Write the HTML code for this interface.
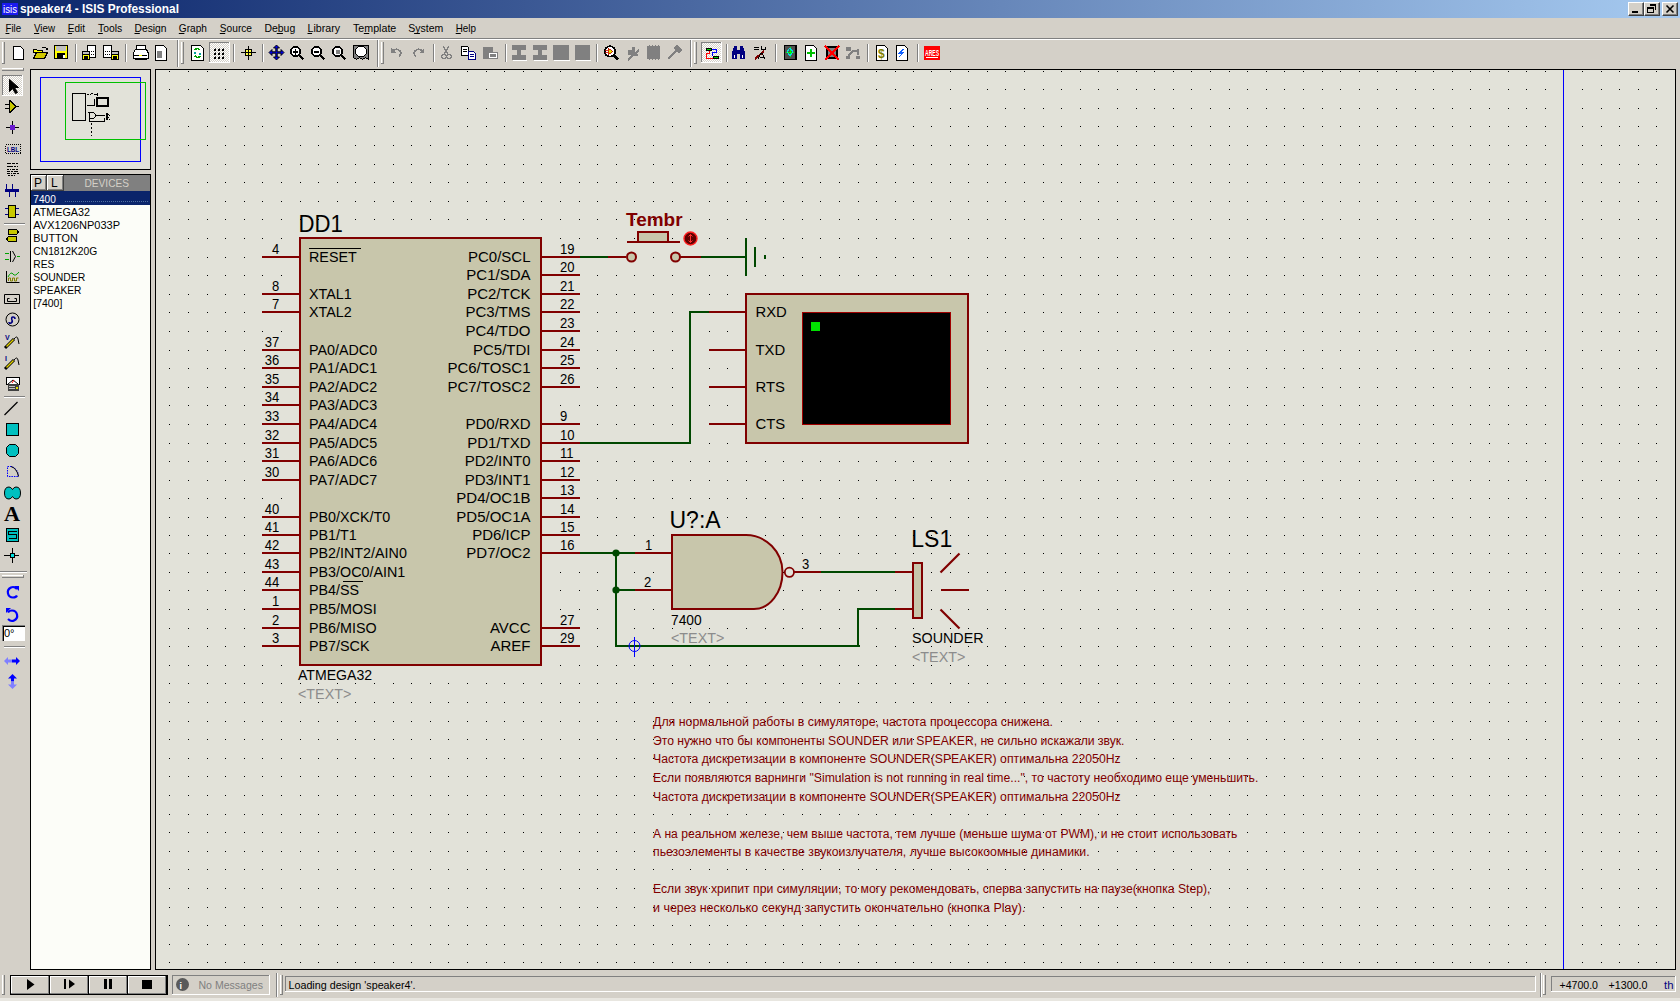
<!DOCTYPE html><html><head><meta charset="utf-8"><style>
*{margin:0;padding:0;box-sizing:border-box}
html,body{width:1680px;height:1001px;overflow:hidden;background:#d4d0c8;font-family:"Liberation Sans", sans-serif;position:relative}
.a{position:absolute}
.t{position:absolute;white-space:nowrap;font-size:11px;color:#000;line-height:1}
.u{text-decoration:underline}
</style></head><body><div class="a" style="left:0;top:0;width:1680px;height:18px;background:linear-gradient(to right,#0a246a,#a6caf0)"></div>
<div class="a" style="left:2px;top:3px;width:16px;height:12px;background:#1a1af0"></div>
<div class="a" style="left:1628px;top:2px;width:16px;height:14px;background:#d4d0c8;border-top:1px solid #fff;border-left:1px solid #fff;border-right:1px solid #404040;border-bottom:1px solid #404040;box-shadow:inset -1px -1px 0 #808080"></div><div class="a" style="left:1632px;top:11px;width:6px;height:2px;background:#000"></div>
<div class="a" style="left:1644px;top:2px;width:16px;height:14px;background:#d4d0c8;border-top:1px solid #fff;border-left:1px solid #fff;border-right:1px solid #404040;border-bottom:1px solid #404040;box-shadow:inset -1px -1px 0 #808080"></div><div class="a" style="left:1647px;top:7px;width:7px;height:6px;border:1px solid #000;border-top-width:2px"></div><div class="a" style="left:1650px;top:4px;width:6px;height:6px;border:1px solid #000;border-top-width:2px;border-left:none;border-bottom:none"></div>
<div class="a" style="left:1662px;top:2px;width:16px;height:14px;background:#d4d0c8;border-top:1px solid #fff;border-left:1px solid #fff;border-right:1px solid #404040;border-bottom:1px solid #404040;box-shadow:inset -1px -1px 0 #808080"></div>
<div class="a" style="left:0;top:38px;width:1680px;height:1px;background:#808080"></div>
<div class="a" style="left:0;top:39px;width:1680px;height:1px;background:#fff"></div>
<div class="a" style="left:30px;top:69px;width:121px;height:101px;border:1px solid #000;background:#e2e2d9"></div>
<div class="a" style="left:30px;top:174px;width:121px;height:796px;border:1px solid #000;background:#fcfdf8"></div>
<div class="a" style="left:155px;top:69px;width:1521px;height:901px;border:1px solid #000;background:#e2e2d9"></div>
<div class="a" style="left:0;top:998px;width:1680px;height:3px;background:#e8e6e0"></div><svg class="a" style="left:0;top:0" width="1680" height="1001" viewBox="0 0 1680 1001" font-family="Liberation Sans, sans-serif"><text x="3" y="13" font-size="11" fill="#fff" textLength="14" lengthAdjust="spacingAndGlyphs">isis</text>
<text x="20" y="13" font-size="12" fill="#fff" textLength="159" lengthAdjust="spacingAndGlyphs" font-weight="bold">speaker4 - ISIS Professional</text>
<path d="M1666.5 5.5l7 7M1673.5 5.5l-7 7" stroke="#000" stroke-width="1.6" fill="none"/>
<text x="5.5" y="32" font-size="11.5" fill="#000" textLength="15.7" lengthAdjust="spacingAndGlyphs">File</text>
<rect x="5.5" y="33" width="3.9" height="1" fill="#000"/>
<text x="34" y="32" font-size="11.5" fill="#000" textLength="21" lengthAdjust="spacingAndGlyphs">View</text>
<rect x="34.0" y="33" width="5.2" height="1" fill="#000"/>
<text x="67.8" y="32" font-size="11.5" fill="#000" textLength="17.2" lengthAdjust="spacingAndGlyphs">Edit</text>
<rect x="67.8" y="33" width="4.3" height="1" fill="#000"/>
<text x="98" y="32" font-size="11.5" fill="#000" textLength="24.2" lengthAdjust="spacingAndGlyphs">Tools</text>
<rect x="98.0" y="33" width="4.8" height="1" fill="#000"/>
<text x="134.5" y="32" font-size="11.5" fill="#000" textLength="32.0" lengthAdjust="spacingAndGlyphs">Design</text>
<rect x="134.5" y="33" width="5.3" height="1" fill="#000"/>
<text x="178.8" y="32" font-size="11.5" fill="#000" textLength="28.2" lengthAdjust="spacingAndGlyphs">Graph</text>
<rect x="178.8" y="33" width="5.6" height="1" fill="#000"/>
<text x="219.8" y="32" font-size="11.5" fill="#000" textLength="32.2" lengthAdjust="spacingAndGlyphs">Source</text>
<rect x="219.8" y="33" width="5.4" height="1" fill="#000"/>
<text x="264.5" y="32" font-size="11.5" fill="#000" textLength="30.7" lengthAdjust="spacingAndGlyphs">Debug</text>
<rect x="276.8" y="33" width="6.1" height="1" fill="#000"/>
<text x="307.5" y="32" font-size="11.5" fill="#000" textLength="32.5" lengthAdjust="spacingAndGlyphs">Library</text>
<rect x="307.5" y="33" width="4.6" height="1" fill="#000"/>
<text x="353" y="32" font-size="11.5" fill="#000" textLength="43.3" lengthAdjust="spacingAndGlyphs">Template</text>
<rect x="363.8" y="33" width="5.4" height="1" fill="#000"/>
<text x="408.3" y="32" font-size="11.5" fill="#000" textLength="35.0" lengthAdjust="spacingAndGlyphs">System</text>
<rect x="414.1" y="33" width="5.8" height="1" fill="#000"/>
<text x="455.7" y="32" font-size="11.5" fill="#000" textLength="20.3" lengthAdjust="spacingAndGlyphs">Help</text>
<rect x="455.7" y="33" width="5.1" height="1" fill="#000"/>
<defs><pattern id="dith" width="2" height="2" patternUnits="userSpaceOnUse"><rect width="2" height="2" fill="#d4d0c8"/><rect width="1" height="1" fill="#fff"/><rect x="1" y="1" width="1" height="1" fill="#fff"/></pattern></defs>
<g shape-rendering="crispEdges">
<rect x="2" y="42" width="1" height="22" fill="#fff"/>
<rect x="3" y="42" width="1" height="22" fill="#d4d0c8"/>
<rect x="4" y="42" width="1" height="22" fill="#808080"/>
<rect x="2" y="63" width="3" height="1" fill="#808080"/>
<path d="M13.5 46.5h7l3 3v9.5h-10z" fill="#fff" stroke="#000" stroke-width="1"/>
<path d="M33.5 49.5h3l1 1h5v2h-9z" fill="#ffff00" stroke="#000" stroke-width="1"/>
<path d="M33.5 58.5l3-6h11l-3 6z" fill="#d0c800" stroke="#000" stroke-width="1"/>
<path d="M41.5 48.5q2-3 5-0" fill="none" stroke="#000" stroke-width="1"/>
<rect x="46" y="48" width="2" height="2" fill="#000"/>
<rect x="54" y="45" width="14" height="14" fill="#000"/>
<rect x="55" y="46" width="12" height="6" fill="#ffff00"/>
<rect x="56" y="46" width="10" height="5" fill="#c0c0c0"/>
<rect x="55" y="52" width="2" height="6" fill="#ffff00"/>
<rect x="65" y="52" width="2" height="6" fill="#ffff00"/>
<rect x="57" y="52" width="8" height="1" fill="#ffff00"/>
<rect x="63" y="55" width="2" height="3" fill="#fff"/>
<rect x="75" y="44" width="1" height="18" fill="#808080"/>
<rect x="76" y="44" width="1" height="18" fill="#fff"/>
<rect x="87" y="45" width="9" height="13" fill="#000"/>
<rect x="88" y="46" width="7" height="11" fill="#fff"/>
<rect x="89" y="51" width="1" height="1" fill="#000"/>
<rect x="91" y="51" width="1" height="1" fill="#000"/>
<rect x="93" y="51" width="1" height="1" fill="#000"/>
<rect x="89" y="54" width="1" height="1" fill="#000"/>
<rect x="91" y="54" width="1" height="1" fill="#000"/>
<rect x="93" y="54" width="1" height="1" fill="#000"/>
<rect x="82" y="51" width="8" height="9" fill="#000"/>
<rect x="83" y="52" width="6" height="2" fill="#c0c0c0"/>
<rect x="83" y="55" width="6" height="4" fill="#ffff00"/>
<rect x="84" y="56" width="4" height="3" fill="#000"/>
<rect x="103" y="45" width="9" height="13" fill="#000"/>
<rect x="104" y="46" width="7" height="11" fill="#fff"/>
<rect x="105" y="51" width="1" height="1" fill="#000"/>
<rect x="107" y="51" width="1" height="1" fill="#000"/>
<rect x="109" y="51" width="1" height="1" fill="#000"/>
<rect x="105" y="54" width="1" height="1" fill="#000"/>
<rect x="107" y="54" width="1" height="1" fill="#000"/>
<rect x="109" y="54" width="1" height="1" fill="#000"/>
<rect x="111" y="51" width="8" height="9" fill="#000"/>
<rect x="112" y="52" width="6" height="2" fill="#c0c0c0"/>
<rect x="112" y="55" width="6" height="4" fill="#ffff00"/>
<rect x="113" y="56" width="4" height="3" fill="#000"/>
<rect x="125" y="44" width="1" height="18" fill="#808080"/>
<rect x="126" y="44" width="1" height="18" fill="#fff"/>
<path d="M136.5 45.5h9v4h-9z" fill="#fff" stroke="#000" stroke-width="1"/>
<path d="M133.5 52.5l2-3h11l1.5 3v6h-14.5z" fill="#fff" stroke="#000" stroke-width="1"/>
<rect x="134" y="55" width="13" height="1" fill="#000"/>
<rect x="139" y="55" width="3" height="1" fill="#ffff00"/>
<rect x="135" y="59" width="12" height="1" fill="#000"/>
<path d="M155.5 45.5h8l3 3v11.5h-11z" fill="#fff" stroke="#000" stroke-width="1"/>
<rect x="157" y="51" width="5" height="7" fill="#808080"/>
<rect x="177" y="40" width="1" height="27" fill="#808080"/>
<rect x="178" y="40" width="1" height="27" fill="#fff"/>
<rect x="181" y="42" width="1" height="22" fill="#fff"/>
<rect x="182" y="42" width="1" height="22" fill="#d4d0c8"/>
<rect x="183" y="42" width="1" height="22" fill="#808080"/>
<rect x="181" y="63" width="3" height="1" fill="#808080"/>
<path d="M191.5 45.5h9l3 3v11.5h-12z" fill="#fff" stroke="#000" stroke-width="1"/>
<path d="M195 50q2-3 5 0M200 56q-2 3-5 0" fill="none" stroke="#00a000" stroke-width="1.6"/>
<rect x="194" y="52" width="2" height="2" fill="#00a0a0"/>
<rect x="199" y="53" width="2" height="2" fill="#00a0a0"/>
<rect x="209" y="42" width="21" height="21" fill="url(#dith)"/>
<rect x="209" y="42" width="21" height="1" fill="#808080"/>
<rect x="209" y="42" width="1" height="21" fill="#808080"/>
<rect x="209" y="62" width="21" height="1" fill="#fff"/>
<rect x="229" y="42" width="1" height="21" fill="#fff"/>
<rect x="214" y="49" width="2" height="2" fill="#000"/>
<rect x="215" y="48" width="1" height="1" fill="#606060"/>
<rect x="218" y="49" width="2" height="2" fill="#000"/>
<rect x="219" y="48" width="1" height="1" fill="#606060"/>
<rect x="222" y="49" width="2" height="2" fill="#000"/>
<rect x="223" y="48" width="1" height="1" fill="#606060"/>
<rect x="214" y="53" width="2" height="2" fill="#000"/>
<rect x="215" y="52" width="1" height="1" fill="#606060"/>
<rect x="218" y="53" width="2" height="2" fill="#000"/>
<rect x="219" y="52" width="1" height="1" fill="#606060"/>
<rect x="222" y="53" width="2" height="2" fill="#000"/>
<rect x="223" y="52" width="1" height="1" fill="#606060"/>
<rect x="214" y="57" width="2" height="2" fill="#000"/>
<rect x="215" y="56" width="1" height="1" fill="#606060"/>
<rect x="218" y="57" width="2" height="2" fill="#000"/>
<rect x="219" y="56" width="1" height="1" fill="#606060"/>
<rect x="222" y="57" width="2" height="2" fill="#000"/>
<rect x="223" y="56" width="1" height="1" fill="#606060"/>
<rect x="233" y="44" width="1" height="18" fill="#808080"/>
<rect x="234" y="44" width="1" height="18" fill="#fff"/>
<rect x="241" y="52" width="15" height="1" fill="#000"/>
<rect x="248" y="46" width="1" height="14" fill="#000"/>
<rect x="245" y="49" width="7" height="7" fill="#000"/>
<rect x="246" y="50" width="2" height="2" fill="#ffff40"/>
<rect x="249" y="50" width="2" height="2" fill="#ffff40"/>
<rect x="246" y="53" width="2" height="2" fill="#ffff40"/>
<rect x="249" y="53" width="2" height="2" fill="#ffff40"/>
<rect x="262" y="44" width="1" height="18" fill="#808080"/>
<rect x="263" y="44" width="1" height="18" fill="#fff"/>
</g>
<path d="M276.5 45L279.5 48H277.25V51.75H281V49.5L284 52.5L281 55.5V53.25H277.25V57H279.5L276.5 60L273.5 57H275.75V53.25H272V55.5L269 52.5L272 49.5V51.75H275.75V48H273.5Z" fill="#0000e0" stroke="#000" stroke-width="0.9"/>
<g shape-rendering="crispEdges">
<circle cx="295.5" cy="51.5" r="4.6" fill="#fff" stroke="#000" stroke-width="2"/>
<path d="M299 55l4.5 4.5" fill="none" stroke="#000" stroke-width="2.2"/>
<rect x="293" y="51" width="5" height="1.5" fill="#000"/>
<rect x="294.8" y="49" width="1.5" height="5.5" fill="#000"/>
<circle cx="316.5" cy="51.5" r="4.6" fill="#fff" stroke="#000" stroke-width="2"/>
<path d="M320 55l4.5 4.5" fill="none" stroke="#000" stroke-width="2.2"/>
<rect x="314" y="51" width="5" height="1.5" fill="#000"/>
<circle cx="337.5" cy="51.5" r="4.6" fill="#fff" stroke="#000" stroke-width="2"/>
<path d="M341 55l4.5 4.5" fill="none" stroke="#000" stroke-width="2.2"/>
<rect x="335.5" y="49.5" width="4" height="4" fill="#808080"/>
<path d="M353.5 45.5h15v14l-3-2-3 2-3-2-3 2-3-2v-12z" fill="#808080" stroke="#000" stroke-width="1"/>
<circle cx="361" cy="51.5" r="5.5" fill="#fff" stroke="#000" stroke-width="1"/>
<rect x="377" y="40" width="1" height="27" fill="#808080"/>
<rect x="378" y="40" width="1" height="27" fill="#fff"/>
<rect x="381" y="42" width="1" height="22" fill="#fff"/>
<rect x="382" y="42" width="1" height="22" fill="#d4d0c8"/>
<rect x="383" y="42" width="1" height="22" fill="#808080"/>
<rect x="381" y="63" width="3" height="1" fill="#808080"/>
<path d="M392 52q4-5 8-1q2 3-1 5" fill="none" stroke="#808080" stroke-width="1.6"/>
<path d="M391 48v5h5z" fill="#808080"/>
<path d="M423 52q-4-5-8-1q-2 3 1 5" fill="none" stroke="#808080" stroke-width="1.6"/>
<path d="M424 48v5h-5z" fill="#808080"/>
<rect x="433" y="44" width="1" height="18" fill="#808080"/>
<rect x="434" y="44" width="1" height="18" fill="#fff"/>
<path d="M443 46l5 8M449 46l-5 8" fill="none" stroke="#808080" stroke-width="1.2"/>
<circle cx="444" cy="56.5" r="2.3" fill="none" stroke="#808080" stroke-width="1.2"/><circle cx="449" cy="56.5" r="2.3" fill="none" stroke="#808080" stroke-width="1.2"/>
<path d="M461.5 46.5h6l1 1v8h-7z" fill="#fff" stroke="#000" stroke-width="1"/>
<rect x="463" y="49" width="4" height="1" fill="#000"/>
<rect x="463" y="51" width="4" height="1" fill="#000"/>
<path d="M468.5 51.5h5l2 2v6h-7z" fill="#fff" stroke="#000080" stroke-width="1"/>
<rect x="470" y="54" width="4" height="1" fill="#000080"/>
<rect x="470" y="56" width="4" height="1" fill="#000080"/>
<rect x="483" y="47" width="10" height="12" fill="#808080"/>
<rect x="488" y="52" width="10" height="7" fill="#808080"/>
<rect x="489" y="53" width="8" height="5" fill="#fff"/>
<rect x="490" y="54" width="6" height="3" fill="#808080"/>
<rect x="505" y="44" width="1" height="18" fill="#808080"/>
<rect x="506" y="44" width="1" height="18" fill="#fff"/>
<rect x="512" y="45" width="14" height="5" fill="#808080"/>
<rect x="512" y="55" width="14" height="5" fill="#808080"/>
<rect x="517" y="50" width="4" height="5" fill="#808080"/>
<rect x="513" y="60" width="14" height="1" fill="#fff"/>
<rect x="533" y="45" width="14" height="5" fill="#808080"/>
<rect x="533" y="55" width="14" height="5" fill="#808080"/>
<rect x="538" y="50" width="4" height="5" fill="#808080"/>
<rect x="534" y="60" width="14" height="1" fill="#fff"/>
<rect x="553" y="45" width="16" height="15" fill="#808080"/>
<rect x="554" y="60" width="16" height="1" fill="#fff"/>
<rect x="575" y="45" width="15" height="15" fill="#808080"/>
<rect x="576" y="60" width="15" height="1" fill="#fff"/>
<rect x="596" y="44" width="1" height="18" fill="#808080"/>
<rect x="597" y="44" width="1" height="18" fill="#fff"/>
<circle cx="610" cy="51.5" r="5.2" fill="#fff" stroke="#000" stroke-width="1.8"/>
<path d="M608 48l5 3.5-5 3.5z" fill="#e0e000" stroke="#c00000" stroke-width="0.8"/>
<path d="M605 50.5h3M605 52.5h3" fill="none" stroke="#c00000" stroke-width="0.8"/>
<path d="M614 55.5l4 4" fill="none" stroke="#000" stroke-width="2.2"/>
<path d="M628 50h4v-3h3v5l4-4v3l-3 3h2v2h-5l-5 5v-3l3-3h-3z" fill="#808080"/>
<rect x="647" y="46" width="13" height="13" fill="#808080"/>
<rect x="649" y="45" width="1" height="15" fill="#808080"/>
<rect x="652" y="45" width="1" height="15" fill="#808080"/>
<rect x="655" y="45" width="1" height="15" fill="#808080"/>
<rect x="658" y="45" width="1" height="15" fill="#808080"/>
<path d="M668 59l8-8" fill="none" stroke="#808080" stroke-width="2.2"/>
<path d="M673 48l4-3 5 5-3 3z" fill="#808080"/>
<rect x="690" y="40" width="1" height="27" fill="#808080"/>
<rect x="691" y="40" width="1" height="27" fill="#fff"/>
<rect x="694" y="42" width="1" height="22" fill="#fff"/>
<rect x="695" y="42" width="1" height="22" fill="#d4d0c8"/>
<rect x="696" y="42" width="1" height="22" fill="#808080"/>
<rect x="694" y="63" width="3" height="1" fill="#808080"/>
<rect x="701" y="42" width="21" height="21" fill="url(#dith)"/>
<rect x="701" y="42" width="21" height="1" fill="#808080"/>
<rect x="701" y="42" width="1" height="21" fill="#808080"/>
<rect x="701" y="62" width="21" height="1" fill="#fff"/>
<rect x="721" y="42" width="1" height="21" fill="#fff"/>
<rect x="706" y="48" width="6" height="3" fill="#000"/>
<rect x="707" y="49" width="4" height="1" fill="#00d000"/>
<rect x="713" y="56" width="6" height="3" fill="#000"/>
<rect x="714" y="57" width="4" height="1" fill="#00d000"/>
<path d="M712 49.5h4v3h-4v3h1" fill="none" stroke="#0000ff" stroke-width="1"/>
<path d="M709 51v2h-3v5h7" fill="none" stroke="#ff0000" stroke-width="1"/>
<rect x="726" y="44" width="1" height="18" fill="#808080"/>
<rect x="727" y="44" width="1" height="18" fill="#fff"/>
<path d="M732 59v-6l2-7h3v13zM740 59v-13h3l2 7v6z" fill="#000080"/>
<rect x="737" y="50" width="3" height="4" fill="#000080"/>
<rect x="734" y="55" width="1" height="3" fill="#fff"/>
<rect x="742" y="55" width="1" height="3" fill="#fff"/>
<rect x="754" y="47" width="5" height="1" fill="#000"/>
<rect x="754" y="49" width="5" height="1" fill="#000"/>
<rect x="761" y="46" width="1" height="4" fill="#000"/>
<rect x="762" y="49" width="4" height="1" fill="#000"/>
<rect x="765" y="47" width="1" height="3" fill="#000"/>
<path d="M755 59l9-8" fill="none" stroke="#800000" stroke-width="2"/>
<path d="M758 59l3-6h1l3 6M760 57h4" fill="none" stroke="#000" stroke-width="1"/>
<rect x="775" y="44" width="1" height="18" fill="#808080"/>
<rect x="776" y="44" width="1" height="18" fill="#fff"/>
<rect x="784" y="45" width="13" height="15" fill="#000"/>
<rect x="785" y="46" width="10" height="13" fill="#505050"/>
<path d="M790 47v10M786 52h8" fill="none" stroke="#00ff00" stroke-width="1"/>
<path d="M790 48l3 4-3 4-3-4z" fill="none" stroke="#00e0e0" stroke-width="1"/>
<path d="M805.5 45.5h8l3 3v11.5h-11z" fill="#fff" stroke="#000" stroke-width="1"/>
<rect x="807" y="52" width="8" height="2" fill="#00c000"/>
<rect x="810" y="49" width="2" height="8" fill="#00c000"/>
<rect x="826" y="46" width="12" height="13" fill="#000"/>
<rect x="828" y="48" width="8" height="9" fill="#808080"/>
<path d="M825 46l14 14M839 46l-14 14" fill="none" stroke="#ff0000" stroke-width="1.8"/>
<rect x="846" y="47" width="5" height="4" fill="#808080"/>
<rect x="846" y="56" width="4" height="3" fill="#808080"/>
<rect x="856" y="56" width="4" height="3" fill="#808080"/>
<path d="M848 56l5-5h4M858 49v6" fill="none" stroke="#808080" stroke-width="1.5"/>
<rect x="867" y="44" width="1" height="18" fill="#808080"/>
<rect x="868" y="44" width="1" height="18" fill="#fff"/>
<path d="M876.5 45.5h8l3 3v11.5h-11z" fill="#fff" stroke="#000" stroke-width="1"/>
<text x="878" y="58" font-size="12" font-weight="bold" fill="#808000">$</text>
<path d="M896.5 45.5h8l3 3v11.5h-11z" fill="#fff" stroke="#000" stroke-width="1"/>
<path d="M904 49l-4 4h3l-4 4" fill="none" stroke="#1060ff" stroke-width="1.4"/>
<rect x="917" y="44" width="1" height="18" fill="#808080"/>
<rect x="918" y="44" width="1" height="18" fill="#fff"/>
<rect x="924" y="46" width="16" height="14" fill="#ff0000"/>
<text x="925" y="56" font-size="9" font-weight="bold" fill="#fff" textLength="14" lengthAdjust="spacingAndGlyphs">ARES</text>
<rect x="926" y="57" width="12" height="1" fill="#fff"/>
</g>
<g shape-rendering="crispEdges">
<rect x="2" y="68" width="22" height="1" fill="#fff"/>
<rect x="2" y="70" width="22" height="1" fill="#808080"/>
<rect x="23" y="68" width="1" height="3" fill="#808080"/>
<rect x="2" y="75" width="21" height="21" fill="url(#dith)"/>
<rect x="2" y="75" width="21" height="1" fill="#808080"/>
<rect x="2" y="75" width="1" height="21" fill="#808080"/>
<rect x="2" y="95" width="21" height="1" fill="#fff"/>
<rect x="22" y="75" width="1" height="21" fill="#fff"/>
</g>
<path d="M9.5 79.5v12l3-3 3 5 2-1-3-5h4z" fill="#000" stroke="#000" stroke-width="1" stroke-linejoin="miter"/>
<g shape-rendering="crispEdges">
<path d="M9.5 100.5v12l7-6z" fill="#c8c800" stroke="#000" stroke-width="1.4"/>
<rect x="5" y="104" width="4" height="1.2" fill="#000"/>
<rect x="5" y="108" width="4" height="1.2" fill="#000"/>
<rect x="16" y="106" width="3" height="1.2" fill="#000"/>
<rect x="12" y="121" width="1" height="13" fill="#000"/>
<rect x="6" y="127" width="13" height="1" fill="#000"/>
<rect x="10" y="125" width="5" height="5" fill="#6a1ad0"/>
<path d="M5.5 144.5h15v9h-15z" fill="none" stroke="#000" stroke-width="1" stroke-dasharray="1 1"/>
<text x="7" y="152" font-size="8" font-weight="bold" fill="#000080" textLength="12" lengthAdjust="spacingAndGlyphs">LBL</text>
<rect x="7" y="163" width="4" height="1" fill="#000"/>
<rect x="12" y="163" width="3" height="1" fill="#000"/>
<rect x="16" y="163" width="2" height="1" fill="#000"/>
<rect x="7" y="166" width="6" height="1" fill="#000"/>
<rect x="14" y="166" width="2" height="1" fill="#000"/>
<rect x="17" y="166" width="1" height="1" fill="#000"/>
<rect x="7" y="169" width="2" height="1" fill="#000"/>
<rect x="10" y="169" width="1" height="1" fill="#000"/>
<rect x="12" y="169" width="3" height="1" fill="#000"/>
<rect x="16" y="169" width="2" height="1" fill="#000"/>
<rect x="7" y="171" width="3" height="1" fill="#000"/>
<rect x="11" y="171" width="2" height="1" fill="#000"/>
<rect x="14" y="171" width="4" height="1" fill="#000"/>
<rect x="7" y="173" width="3" height="1" fill="#000"/>
<rect x="11" y="173" width="1" height="1" fill="#000"/>
<rect x="13" y="173" width="3" height="1" fill="#000"/>
<rect x="17" y="173" width="2" height="1" fill="#000"/>
<rect x="8" y="175" width="2" height="1" fill="#000"/>
<rect x="11" y="175" width="2" height="1" fill="#000"/>
<rect x="14" y="175" width="1" height="1" fill="#000"/>
<rect x="5" y="189" width="14" height="3" fill="#000080"/>
<rect x="6" y="184" width="1" height="5" fill="#000080"/>
<rect x="12" y="184" width="1" height="5" fill="#000080"/>
<rect x="9" y="192" width="1" height="5" fill="#000080"/>
<rect x="15" y="192" width="1" height="5" fill="#000080"/>
<rect x="5" y="208" width="14" height="1" fill="#000080"/>
<rect x="5" y="214" width="14" height="1" fill="#000080"/>
<path d="M8.5 205.5h7v12h-7z" fill="#c8c800" stroke="#000" stroke-width="1"/>
<rect x="4" y="223" width="21" height="1" fill="#808080"/>
<rect x="4" y="224" width="21" height="1" fill="#fff"/>
<path d="M8.5 229.5h8l2 2.5-2 2.5h-8z" fill="#c8c800" stroke="#000" stroke-width="1"/>
<path d="M8.5 236.5h8v5h-8l-2-2.5z" fill="#c8c800" stroke="#000" stroke-width="1"/>
<rect x="5" y="253" width="4" height="1" fill="#00a000"/>
<rect x="5" y="259" width="4" height="1" fill="#00a000"/>
<rect x="17" y="256" width="3" height="1" fill="#00a000"/>
<rect x="10" y="251" width="1" height="11" fill="#000"/>
</g>
<path d="M12.5 251l3 5.5-3 5.5" fill="none" stroke="#000" stroke-width="1"/>
<path d="M6.5 271v11.5h13" fill="none" stroke="#000" stroke-width="1"/>
<path d="M8 277q3-6 5-3t6-2" fill="none" stroke="#00a000" stroke-width="1"/>
<path d="M8.5 281v-3h2v3h2v-3h2v3h2v-3h2" fill="none" stroke="#808000" stroke-width="1"/>
<path d="M4.5 294.5h15v9h-15z" fill="none" stroke="#000" stroke-width="1"/>
<path d="M7.5 301.5v-3h2M14.5 298.5h2v3h-9" fill="none" stroke="#000" stroke-width="1"/>
<circle cx="12.5" cy="319.5" r="6.5" fill="none" stroke="#000" stroke-width="1"/>
<path d="M9 322q0 2 2 1q2-1 1-3q-1-3 1-3q2 0 2 2" fill="none" stroke="#000080" stroke-width="1.6"/>
<text x="5" y="340" font-size="7" font-weight="bold" fill="#000080">V</text>
<path d="M5 348l9-9" fill="none" stroke="#000" stroke-width="3"/>
<path d="M6.5 346.5l7-7" fill="none" stroke="#e0d000" stroke-width="1.4"/>
<path d="M14 339q3-4 4 0l1 5" fill="none" stroke="#000" stroke-width="1"/>
<text x="5" y="361" font-size="7" font-weight="bold" fill="#000080">I</text>
<path d="M5 369l9-9" fill="none" stroke="#000" stroke-width="3"/>
<path d="M6.5 367.5l7-7" fill="none" stroke="#e0d000" stroke-width="1.4"/>
<path d="M14 360q3-4 4 0l1 5" fill="none" stroke="#000" stroke-width="1"/>
<g shape-rendering="crispEdges">
<rect x="6" y="377" width="14" height="8" fill="#000"/>
<rect x="7" y="378" width="12" height="6" fill="#fff"/>
<rect x="8" y="384" width="11" height="7" fill="#404040"/>
<rect x="9" y="386" width="6" height="1" fill="#c0c0c0"/>
<rect x="9" y="388" width="6" height="1" fill="#c0c0c0"/>
<rect x="16" y="387" width="2" height="2" fill="#e0e000"/>
</g>
<path d="M8 384l5-4 5 4" fill="none" stroke="#000" stroke-width="1"/>
<path d="M12 383l2-3" fill="none" stroke="#ff0000" stroke-width="1"/>
<g shape-rendering="crispEdges">
<rect x="4" y="396" width="21" height="1" fill="#808080"/>
<rect x="4" y="397" width="21" height="1" fill="#fff"/>
</g>
<path d="M4.5 415l13-13" fill="none" stroke="#000" stroke-width="1.3"/>
<rect x="6.5" y="423.5" width="12" height="12" fill="#00c0c0" stroke="#000" stroke-width="1" shape-rendering="crispEdges"/>
<path d="M9.5 444.5h6l3 3v6l-3 3h-6l-3-3v-6z" fill="#00c0c0" stroke="#000" stroke-width="1"/>
<path d="M7.5 476.5v-10h4q6 2 7 9v1z" fill="none" stroke="#0000ff" stroke-width="1" stroke-dasharray="1.5 1"/>
<path d="M11 466.5q6 2 7.5 10" fill="none" stroke="#000" stroke-width="1"/>
<path d="M4.5 493q0-6 4.5-6q2 0 3.5 2.5q1.5-2.5 3.5-2.5q4.5 0 4.5 6t-4.5 6q-2 0-3.5-2.5q-1.5 2.5-3.5 2.5q-4.5 0-4.5-6z" fill="#00c0c0" stroke="#000" stroke-width="1"/>
<text x="4" y="521" font-size="20" font-weight="bold" font-family="Liberation Serif, serif" fill="#000" textLength="16" lengthAdjust="spacingAndGlyphs">A</text>
<g shape-rendering="crispEdges">
<rect x="6" y="528" width="13" height="14" fill="#000"/>
<rect x="7" y="529" width="11" height="12" fill="#00c0c0"/>
<path d="M16.5 531.5h-8v3h8v4h-8" fill="none" stroke="#000" stroke-width="1.8"/>
<rect x="12" y="548" width="1" height="15" fill="#000"/>
<rect x="4" y="555" width="15" height="1" fill="#000"/>
<rect x="10" y="553" width="5" height="5" fill="#000"/>
<rect x="11" y="554" width="3" height="3" fill="#00e0e0"/>
<rect x="0" y="571" width="27" height="1" fill="#808080"/>
<rect x="0" y="572" width="27" height="1" fill="#fff"/>
<rect x="2" y="575" width="22" height="1" fill="#fff"/>
<rect x="2" y="577" width="22" height="1" fill="#808080"/>
<rect x="23" y="575" width="1" height="3" fill="#808080"/>
</g>
<path d="M17 589q-3-3-6-1.5q-4 2-3 6q1 4 5 4q3 0 4-2" fill="none" stroke="#0000ff" stroke-width="2.2"/>
<path d="M14 586h5v5z" fill="#0000ff"/>
<path d="M8 619q3 3 6 1.5q4-2 3-6q-1-4-5-4q-3 0-4 2" fill="none" stroke="#0000ff" stroke-width="2.2"/>
<path d="M11 608h-5v5z" fill="#0000ff"/>
<g shape-rendering="crispEdges">
<rect x="2" y="625" width="23" height="16" fill="#fff"/>
<rect x="2" y="625" width="23" height="1" fill="#808080"/>
<rect x="2" y="625" width="1" height="16" fill="#808080"/>
<rect x="3" y="626" width="22" height="1" fill="#000"/>
<rect x="3" y="626" width="1" height="15" fill="#000"/>
</g>
<text x="4" y="637" font-size="11" fill="#000">0°</text>
<g shape-rendering="crispEdges">
<rect x="4" y="646" width="21" height="1" fill="#808080"/>
<rect x="4" y="647" width="21" height="1" fill="#fff"/>
</g>
<path d="M4 661l4-4v2.5h4v3h-4v2.5z" fill="#8080ff"/>
<path d="M20 661l-4-4v2.5h-4v3h4v2.5z" fill="#0000ff"/>
<path d="M12.5 674l-4.5 4.5h3v3h3v-3h3z" fill="#0000ff"/>
<path d="M12.5 689l-4.5-4.5h3v-3h3v3h3z" fill="#8080ff"/>
<path fill="#000" shape-rendering="crispEdges" d="M169 71h1v1h-1zM188 71h1v1h-1zM207 71h1v1h-1zM225 71h1v1h-1zM244 71h1v1h-1zM262 71h1v1h-1zM281 71h1v1h-1zM300 71h1v1h-1zM318 71h1v1h-1zM337 71h1v1h-1zM355 71h1v1h-1zM374 71h1v1h-1zM393 71h1v1h-1zM411 71h1v1h-1zM430 71h1v1h-1zM448 71h1v1h-1zM467 71h1v1h-1zM486 71h1v1h-1zM504 71h1v1h-1zM523 71h1v1h-1zM541 71h1v1h-1zM560 71h1v1h-1zM579 71h1v1h-1zM597 71h1v1h-1zM616 71h1v1h-1zM634 71h1v1h-1zM653 71h1v1h-1zM672 71h1v1h-1zM690 71h1v1h-1zM709 71h1v1h-1zM727 71h1v1h-1zM746 71h1v1h-1zM765 71h1v1h-1zM783 71h1v1h-1zM802 71h1v1h-1zM820 71h1v1h-1zM839 71h1v1h-1zM858 71h1v1h-1zM876 71h1v1h-1zM895 71h1v1h-1zM913 71h1v1h-1zM931 71h1v1h-1zM950 71h1v1h-1zM968 71h1v1h-1zM987 71h1v1h-1zM1005 71h1v1h-1zM1024 71h1v1h-1zM1043 71h1v1h-1zM1061 71h1v1h-1zM1080 71h1v1h-1zM1098 71h1v1h-1zM1117 71h1v1h-1zM1136 71h1v1h-1zM1154 71h1v1h-1zM1173 71h1v1h-1zM1191 71h1v1h-1zM1210 71h1v1h-1zM1229 71h1v1h-1zM1247 71h1v1h-1zM1266 71h1v1h-1zM1284 71h1v1h-1zM1303 71h1v1h-1zM1322 71h1v1h-1zM1340 71h1v1h-1zM1359 71h1v1h-1zM1377 71h1v1h-1zM1396 71h1v1h-1zM1415 71h1v1h-1zM1433 71h1v1h-1zM1452 71h1v1h-1zM1470 71h1v1h-1zM1489 71h1v1h-1zM1508 71h1v1h-1zM1526 71h1v1h-1zM1545 71h1v1h-1zM1563 71h1v1h-1zM1582 71h1v1h-1zM1601 71h1v1h-1zM1619 71h1v1h-1zM1638 71h1v1h-1zM1656 71h1v1h-1zM169 89h1v1h-1zM188 89h1v1h-1zM207 89h1v1h-1zM225 89h1v1h-1zM244 89h1v1h-1zM262 89h1v1h-1zM281 89h1v1h-1zM300 89h1v1h-1zM318 89h1v1h-1zM337 89h1v1h-1zM355 89h1v1h-1zM374 89h1v1h-1zM393 89h1v1h-1zM411 89h1v1h-1zM430 89h1v1h-1zM448 89h1v1h-1zM467 89h1v1h-1zM486 89h1v1h-1zM504 89h1v1h-1zM523 89h1v1h-1zM541 89h1v1h-1zM560 89h1v1h-1zM579 89h1v1h-1zM597 89h1v1h-1zM616 89h1v1h-1zM634 89h1v1h-1zM653 89h1v1h-1zM672 89h1v1h-1zM690 89h1v1h-1zM709 89h1v1h-1zM727 89h1v1h-1zM746 89h1v1h-1zM765 89h1v1h-1zM783 89h1v1h-1zM802 89h1v1h-1zM820 89h1v1h-1zM839 89h1v1h-1zM858 89h1v1h-1zM876 89h1v1h-1zM895 89h1v1h-1zM913 89h1v1h-1zM931 89h1v1h-1zM950 89h1v1h-1zM968 89h1v1h-1zM987 89h1v1h-1zM1005 89h1v1h-1zM1024 89h1v1h-1zM1043 89h1v1h-1zM1061 89h1v1h-1zM1080 89h1v1h-1zM1098 89h1v1h-1zM1117 89h1v1h-1zM1136 89h1v1h-1zM1154 89h1v1h-1zM1173 89h1v1h-1zM1191 89h1v1h-1zM1210 89h1v1h-1zM1229 89h1v1h-1zM1247 89h1v1h-1zM1266 89h1v1h-1zM1284 89h1v1h-1zM1303 89h1v1h-1zM1322 89h1v1h-1zM1340 89h1v1h-1zM1359 89h1v1h-1zM1377 89h1v1h-1zM1396 89h1v1h-1zM1415 89h1v1h-1zM1433 89h1v1h-1zM1452 89h1v1h-1zM1470 89h1v1h-1zM1489 89h1v1h-1zM1508 89h1v1h-1zM1526 89h1v1h-1zM1545 89h1v1h-1zM1563 89h1v1h-1zM1582 89h1v1h-1zM1601 89h1v1h-1zM1619 89h1v1h-1zM1638 89h1v1h-1zM1656 89h1v1h-1zM169 108h1v1h-1zM188 108h1v1h-1zM207 108h1v1h-1zM225 108h1v1h-1zM244 108h1v1h-1zM262 108h1v1h-1zM281 108h1v1h-1zM300 108h1v1h-1zM318 108h1v1h-1zM337 108h1v1h-1zM355 108h1v1h-1zM374 108h1v1h-1zM393 108h1v1h-1zM411 108h1v1h-1zM430 108h1v1h-1zM448 108h1v1h-1zM467 108h1v1h-1zM486 108h1v1h-1zM504 108h1v1h-1zM523 108h1v1h-1zM541 108h1v1h-1zM560 108h1v1h-1zM579 108h1v1h-1zM597 108h1v1h-1zM616 108h1v1h-1zM634 108h1v1h-1zM653 108h1v1h-1zM672 108h1v1h-1zM690 108h1v1h-1zM709 108h1v1h-1zM727 108h1v1h-1zM746 108h1v1h-1zM765 108h1v1h-1zM783 108h1v1h-1zM802 108h1v1h-1zM820 108h1v1h-1zM839 108h1v1h-1zM858 108h1v1h-1zM876 108h1v1h-1zM895 108h1v1h-1zM913 108h1v1h-1zM931 108h1v1h-1zM950 108h1v1h-1zM968 108h1v1h-1zM987 108h1v1h-1zM1005 108h1v1h-1zM1024 108h1v1h-1zM1043 108h1v1h-1zM1061 108h1v1h-1zM1080 108h1v1h-1zM1098 108h1v1h-1zM1117 108h1v1h-1zM1136 108h1v1h-1zM1154 108h1v1h-1zM1173 108h1v1h-1zM1191 108h1v1h-1zM1210 108h1v1h-1zM1229 108h1v1h-1zM1247 108h1v1h-1zM1266 108h1v1h-1zM1284 108h1v1h-1zM1303 108h1v1h-1zM1322 108h1v1h-1zM1340 108h1v1h-1zM1359 108h1v1h-1zM1377 108h1v1h-1zM1396 108h1v1h-1zM1415 108h1v1h-1zM1433 108h1v1h-1zM1452 108h1v1h-1zM1470 108h1v1h-1zM1489 108h1v1h-1zM1508 108h1v1h-1zM1526 108h1v1h-1zM1545 108h1v1h-1zM1563 108h1v1h-1zM1582 108h1v1h-1zM1601 108h1v1h-1zM1619 108h1v1h-1zM1638 108h1v1h-1zM1656 108h1v1h-1zM169 126h1v1h-1zM188 126h1v1h-1zM207 126h1v1h-1zM225 126h1v1h-1zM244 126h1v1h-1zM262 126h1v1h-1zM281 126h1v1h-1zM300 126h1v1h-1zM318 126h1v1h-1zM337 126h1v1h-1zM355 126h1v1h-1zM374 126h1v1h-1zM393 126h1v1h-1zM411 126h1v1h-1zM430 126h1v1h-1zM448 126h1v1h-1zM467 126h1v1h-1zM486 126h1v1h-1zM504 126h1v1h-1zM523 126h1v1h-1zM541 126h1v1h-1zM560 126h1v1h-1zM579 126h1v1h-1zM597 126h1v1h-1zM616 126h1v1h-1zM634 126h1v1h-1zM653 126h1v1h-1zM672 126h1v1h-1zM690 126h1v1h-1zM709 126h1v1h-1zM727 126h1v1h-1zM746 126h1v1h-1zM765 126h1v1h-1zM783 126h1v1h-1zM802 126h1v1h-1zM820 126h1v1h-1zM839 126h1v1h-1zM858 126h1v1h-1zM876 126h1v1h-1zM895 126h1v1h-1zM913 126h1v1h-1zM931 126h1v1h-1zM950 126h1v1h-1zM968 126h1v1h-1zM987 126h1v1h-1zM1005 126h1v1h-1zM1024 126h1v1h-1zM1043 126h1v1h-1zM1061 126h1v1h-1zM1080 126h1v1h-1zM1098 126h1v1h-1zM1117 126h1v1h-1zM1136 126h1v1h-1zM1154 126h1v1h-1zM1173 126h1v1h-1zM1191 126h1v1h-1zM1210 126h1v1h-1zM1229 126h1v1h-1zM1247 126h1v1h-1zM1266 126h1v1h-1zM1284 126h1v1h-1zM1303 126h1v1h-1zM1322 126h1v1h-1zM1340 126h1v1h-1zM1359 126h1v1h-1zM1377 126h1v1h-1zM1396 126h1v1h-1zM1415 126h1v1h-1zM1433 126h1v1h-1zM1452 126h1v1h-1zM1470 126h1v1h-1zM1489 126h1v1h-1zM1508 126h1v1h-1zM1526 126h1v1h-1zM1545 126h1v1h-1zM1563 126h1v1h-1zM1582 126h1v1h-1zM1601 126h1v1h-1zM1619 126h1v1h-1zM1638 126h1v1h-1zM1656 126h1v1h-1zM169 145h1v1h-1zM188 145h1v1h-1zM207 145h1v1h-1zM225 145h1v1h-1zM244 145h1v1h-1zM262 145h1v1h-1zM281 145h1v1h-1zM300 145h1v1h-1zM318 145h1v1h-1zM337 145h1v1h-1zM355 145h1v1h-1zM374 145h1v1h-1zM393 145h1v1h-1zM411 145h1v1h-1zM430 145h1v1h-1zM448 145h1v1h-1zM467 145h1v1h-1zM486 145h1v1h-1zM504 145h1v1h-1zM523 145h1v1h-1zM541 145h1v1h-1zM560 145h1v1h-1zM579 145h1v1h-1zM597 145h1v1h-1zM616 145h1v1h-1zM634 145h1v1h-1zM653 145h1v1h-1zM672 145h1v1h-1zM690 145h1v1h-1zM709 145h1v1h-1zM727 145h1v1h-1zM746 145h1v1h-1zM765 145h1v1h-1zM783 145h1v1h-1zM802 145h1v1h-1zM820 145h1v1h-1zM839 145h1v1h-1zM858 145h1v1h-1zM876 145h1v1h-1zM895 145h1v1h-1zM913 145h1v1h-1zM931 145h1v1h-1zM950 145h1v1h-1zM968 145h1v1h-1zM987 145h1v1h-1zM1005 145h1v1h-1zM1024 145h1v1h-1zM1043 145h1v1h-1zM1061 145h1v1h-1zM1080 145h1v1h-1zM1098 145h1v1h-1zM1117 145h1v1h-1zM1136 145h1v1h-1zM1154 145h1v1h-1zM1173 145h1v1h-1zM1191 145h1v1h-1zM1210 145h1v1h-1zM1229 145h1v1h-1zM1247 145h1v1h-1zM1266 145h1v1h-1zM1284 145h1v1h-1zM1303 145h1v1h-1zM1322 145h1v1h-1zM1340 145h1v1h-1zM1359 145h1v1h-1zM1377 145h1v1h-1zM1396 145h1v1h-1zM1415 145h1v1h-1zM1433 145h1v1h-1zM1452 145h1v1h-1zM1470 145h1v1h-1zM1489 145h1v1h-1zM1508 145h1v1h-1zM1526 145h1v1h-1zM1545 145h1v1h-1zM1563 145h1v1h-1zM1582 145h1v1h-1zM1601 145h1v1h-1zM1619 145h1v1h-1zM1638 145h1v1h-1zM1656 145h1v1h-1zM169 164h1v1h-1zM188 164h1v1h-1zM207 164h1v1h-1zM225 164h1v1h-1zM244 164h1v1h-1zM262 164h1v1h-1zM281 164h1v1h-1zM300 164h1v1h-1zM318 164h1v1h-1zM337 164h1v1h-1zM355 164h1v1h-1zM374 164h1v1h-1zM393 164h1v1h-1zM411 164h1v1h-1zM430 164h1v1h-1zM448 164h1v1h-1zM467 164h1v1h-1zM486 164h1v1h-1zM504 164h1v1h-1zM523 164h1v1h-1zM541 164h1v1h-1zM560 164h1v1h-1zM579 164h1v1h-1zM597 164h1v1h-1zM616 164h1v1h-1zM634 164h1v1h-1zM653 164h1v1h-1zM672 164h1v1h-1zM690 164h1v1h-1zM709 164h1v1h-1zM727 164h1v1h-1zM746 164h1v1h-1zM765 164h1v1h-1zM783 164h1v1h-1zM802 164h1v1h-1zM820 164h1v1h-1zM839 164h1v1h-1zM858 164h1v1h-1zM876 164h1v1h-1zM895 164h1v1h-1zM913 164h1v1h-1zM931 164h1v1h-1zM950 164h1v1h-1zM968 164h1v1h-1zM987 164h1v1h-1zM1005 164h1v1h-1zM1024 164h1v1h-1zM1043 164h1v1h-1zM1061 164h1v1h-1zM1080 164h1v1h-1zM1098 164h1v1h-1zM1117 164h1v1h-1zM1136 164h1v1h-1zM1154 164h1v1h-1zM1173 164h1v1h-1zM1191 164h1v1h-1zM1210 164h1v1h-1zM1229 164h1v1h-1zM1247 164h1v1h-1zM1266 164h1v1h-1zM1284 164h1v1h-1zM1303 164h1v1h-1zM1322 164h1v1h-1zM1340 164h1v1h-1zM1359 164h1v1h-1zM1377 164h1v1h-1zM1396 164h1v1h-1zM1415 164h1v1h-1zM1433 164h1v1h-1zM1452 164h1v1h-1zM1470 164h1v1h-1zM1489 164h1v1h-1zM1508 164h1v1h-1zM1526 164h1v1h-1zM1545 164h1v1h-1zM1563 164h1v1h-1zM1582 164h1v1h-1zM1601 164h1v1h-1zM1619 164h1v1h-1zM1638 164h1v1h-1zM1656 164h1v1h-1zM169 182h1v1h-1zM188 182h1v1h-1zM207 182h1v1h-1zM225 182h1v1h-1zM244 182h1v1h-1zM262 182h1v1h-1zM281 182h1v1h-1zM300 182h1v1h-1zM318 182h1v1h-1zM337 182h1v1h-1zM355 182h1v1h-1zM374 182h1v1h-1zM393 182h1v1h-1zM411 182h1v1h-1zM430 182h1v1h-1zM448 182h1v1h-1zM467 182h1v1h-1zM486 182h1v1h-1zM504 182h1v1h-1zM523 182h1v1h-1zM541 182h1v1h-1zM560 182h1v1h-1zM579 182h1v1h-1zM597 182h1v1h-1zM616 182h1v1h-1zM634 182h1v1h-1zM653 182h1v1h-1zM672 182h1v1h-1zM690 182h1v1h-1zM709 182h1v1h-1zM727 182h1v1h-1zM746 182h1v1h-1zM765 182h1v1h-1zM783 182h1v1h-1zM802 182h1v1h-1zM820 182h1v1h-1zM839 182h1v1h-1zM858 182h1v1h-1zM876 182h1v1h-1zM895 182h1v1h-1zM913 182h1v1h-1zM931 182h1v1h-1zM950 182h1v1h-1zM968 182h1v1h-1zM987 182h1v1h-1zM1005 182h1v1h-1zM1024 182h1v1h-1zM1043 182h1v1h-1zM1061 182h1v1h-1zM1080 182h1v1h-1zM1098 182h1v1h-1zM1117 182h1v1h-1zM1136 182h1v1h-1zM1154 182h1v1h-1zM1173 182h1v1h-1zM1191 182h1v1h-1zM1210 182h1v1h-1zM1229 182h1v1h-1zM1247 182h1v1h-1zM1266 182h1v1h-1zM1284 182h1v1h-1zM1303 182h1v1h-1zM1322 182h1v1h-1zM1340 182h1v1h-1zM1359 182h1v1h-1zM1377 182h1v1h-1zM1396 182h1v1h-1zM1415 182h1v1h-1zM1433 182h1v1h-1zM1452 182h1v1h-1zM1470 182h1v1h-1zM1489 182h1v1h-1zM1508 182h1v1h-1zM1526 182h1v1h-1zM1545 182h1v1h-1zM1563 182h1v1h-1zM1582 182h1v1h-1zM1601 182h1v1h-1zM1619 182h1v1h-1zM1638 182h1v1h-1zM1656 182h1v1h-1zM169 201h1v1h-1zM188 201h1v1h-1zM207 201h1v1h-1zM225 201h1v1h-1zM244 201h1v1h-1zM262 201h1v1h-1zM281 201h1v1h-1zM300 201h1v1h-1zM318 201h1v1h-1zM337 201h1v1h-1zM355 201h1v1h-1zM374 201h1v1h-1zM393 201h1v1h-1zM411 201h1v1h-1zM430 201h1v1h-1zM448 201h1v1h-1zM467 201h1v1h-1zM486 201h1v1h-1zM504 201h1v1h-1zM523 201h1v1h-1zM541 201h1v1h-1zM560 201h1v1h-1zM579 201h1v1h-1zM597 201h1v1h-1zM616 201h1v1h-1zM634 201h1v1h-1zM653 201h1v1h-1zM672 201h1v1h-1zM690 201h1v1h-1zM709 201h1v1h-1zM727 201h1v1h-1zM746 201h1v1h-1zM765 201h1v1h-1zM783 201h1v1h-1zM802 201h1v1h-1zM820 201h1v1h-1zM839 201h1v1h-1zM858 201h1v1h-1zM876 201h1v1h-1zM895 201h1v1h-1zM913 201h1v1h-1zM931 201h1v1h-1zM950 201h1v1h-1zM968 201h1v1h-1zM987 201h1v1h-1zM1005 201h1v1h-1zM1024 201h1v1h-1zM1043 201h1v1h-1zM1061 201h1v1h-1zM1080 201h1v1h-1zM1098 201h1v1h-1zM1117 201h1v1h-1zM1136 201h1v1h-1zM1154 201h1v1h-1zM1173 201h1v1h-1zM1191 201h1v1h-1zM1210 201h1v1h-1zM1229 201h1v1h-1zM1247 201h1v1h-1zM1266 201h1v1h-1zM1284 201h1v1h-1zM1303 201h1v1h-1zM1322 201h1v1h-1zM1340 201h1v1h-1zM1359 201h1v1h-1zM1377 201h1v1h-1zM1396 201h1v1h-1zM1415 201h1v1h-1zM1433 201h1v1h-1zM1452 201h1v1h-1zM1470 201h1v1h-1zM1489 201h1v1h-1zM1508 201h1v1h-1zM1526 201h1v1h-1zM1545 201h1v1h-1zM1563 201h1v1h-1zM1582 201h1v1h-1zM1601 201h1v1h-1zM1619 201h1v1h-1zM1638 201h1v1h-1zM1656 201h1v1h-1zM169 219h1v1h-1zM188 219h1v1h-1zM207 219h1v1h-1zM225 219h1v1h-1zM244 219h1v1h-1zM262 219h1v1h-1zM281 219h1v1h-1zM300 219h1v1h-1zM318 219h1v1h-1zM337 219h1v1h-1zM355 219h1v1h-1zM374 219h1v1h-1zM393 219h1v1h-1zM411 219h1v1h-1zM430 219h1v1h-1zM448 219h1v1h-1zM467 219h1v1h-1zM486 219h1v1h-1zM504 219h1v1h-1zM523 219h1v1h-1zM541 219h1v1h-1zM560 219h1v1h-1zM579 219h1v1h-1zM597 219h1v1h-1zM616 219h1v1h-1zM634 219h1v1h-1zM653 219h1v1h-1zM672 219h1v1h-1zM690 219h1v1h-1zM709 219h1v1h-1zM727 219h1v1h-1zM746 219h1v1h-1zM765 219h1v1h-1zM783 219h1v1h-1zM802 219h1v1h-1zM820 219h1v1h-1zM839 219h1v1h-1zM858 219h1v1h-1zM876 219h1v1h-1zM895 219h1v1h-1zM913 219h1v1h-1zM931 219h1v1h-1zM950 219h1v1h-1zM968 219h1v1h-1zM987 219h1v1h-1zM1005 219h1v1h-1zM1024 219h1v1h-1zM1043 219h1v1h-1zM1061 219h1v1h-1zM1080 219h1v1h-1zM1098 219h1v1h-1zM1117 219h1v1h-1zM1136 219h1v1h-1zM1154 219h1v1h-1zM1173 219h1v1h-1zM1191 219h1v1h-1zM1210 219h1v1h-1zM1229 219h1v1h-1zM1247 219h1v1h-1zM1266 219h1v1h-1zM1284 219h1v1h-1zM1303 219h1v1h-1zM1322 219h1v1h-1zM1340 219h1v1h-1zM1359 219h1v1h-1zM1377 219h1v1h-1zM1396 219h1v1h-1zM1415 219h1v1h-1zM1433 219h1v1h-1zM1452 219h1v1h-1zM1470 219h1v1h-1zM1489 219h1v1h-1zM1508 219h1v1h-1zM1526 219h1v1h-1zM1545 219h1v1h-1zM1563 219h1v1h-1zM1582 219h1v1h-1zM1601 219h1v1h-1zM1619 219h1v1h-1zM1638 219h1v1h-1zM1656 219h1v1h-1zM169 238h1v1h-1zM188 238h1v1h-1zM207 238h1v1h-1zM225 238h1v1h-1zM244 238h1v1h-1zM262 238h1v1h-1zM281 238h1v1h-1zM300 238h1v1h-1zM318 238h1v1h-1zM337 238h1v1h-1zM355 238h1v1h-1zM374 238h1v1h-1zM393 238h1v1h-1zM411 238h1v1h-1zM430 238h1v1h-1zM448 238h1v1h-1zM467 238h1v1h-1zM486 238h1v1h-1zM504 238h1v1h-1zM523 238h1v1h-1zM541 238h1v1h-1zM560 238h1v1h-1zM579 238h1v1h-1zM597 238h1v1h-1zM616 238h1v1h-1zM634 238h1v1h-1zM653 238h1v1h-1zM672 238h1v1h-1zM690 238h1v1h-1zM709 238h1v1h-1zM727 238h1v1h-1zM746 238h1v1h-1zM765 238h1v1h-1zM783 238h1v1h-1zM802 238h1v1h-1zM820 238h1v1h-1zM839 238h1v1h-1zM858 238h1v1h-1zM876 238h1v1h-1zM895 238h1v1h-1zM913 238h1v1h-1zM931 238h1v1h-1zM950 238h1v1h-1zM968 238h1v1h-1zM987 238h1v1h-1zM1005 238h1v1h-1zM1024 238h1v1h-1zM1043 238h1v1h-1zM1061 238h1v1h-1zM1080 238h1v1h-1zM1098 238h1v1h-1zM1117 238h1v1h-1zM1136 238h1v1h-1zM1154 238h1v1h-1zM1173 238h1v1h-1zM1191 238h1v1h-1zM1210 238h1v1h-1zM1229 238h1v1h-1zM1247 238h1v1h-1zM1266 238h1v1h-1zM1284 238h1v1h-1zM1303 238h1v1h-1zM1322 238h1v1h-1zM1340 238h1v1h-1zM1359 238h1v1h-1zM1377 238h1v1h-1zM1396 238h1v1h-1zM1415 238h1v1h-1zM1433 238h1v1h-1zM1452 238h1v1h-1zM1470 238h1v1h-1zM1489 238h1v1h-1zM1508 238h1v1h-1zM1526 238h1v1h-1zM1545 238h1v1h-1zM1563 238h1v1h-1zM1582 238h1v1h-1zM1601 238h1v1h-1zM1619 238h1v1h-1zM1638 238h1v1h-1zM1656 238h1v1h-1zM169 257h1v1h-1zM188 257h1v1h-1zM207 257h1v1h-1zM225 257h1v1h-1zM244 257h1v1h-1zM262 257h1v1h-1zM281 257h1v1h-1zM300 257h1v1h-1zM318 257h1v1h-1zM337 257h1v1h-1zM355 257h1v1h-1zM374 257h1v1h-1zM393 257h1v1h-1zM411 257h1v1h-1zM430 257h1v1h-1zM448 257h1v1h-1zM467 257h1v1h-1zM486 257h1v1h-1zM504 257h1v1h-1zM523 257h1v1h-1zM541 257h1v1h-1zM560 257h1v1h-1zM579 257h1v1h-1zM597 257h1v1h-1zM616 257h1v1h-1zM634 257h1v1h-1zM653 257h1v1h-1zM672 257h1v1h-1zM690 257h1v1h-1zM709 257h1v1h-1zM727 257h1v1h-1zM746 257h1v1h-1zM765 257h1v1h-1zM783 257h1v1h-1zM802 257h1v1h-1zM820 257h1v1h-1zM839 257h1v1h-1zM858 257h1v1h-1zM876 257h1v1h-1zM895 257h1v1h-1zM913 257h1v1h-1zM931 257h1v1h-1zM950 257h1v1h-1zM968 257h1v1h-1zM987 257h1v1h-1zM1005 257h1v1h-1zM1024 257h1v1h-1zM1043 257h1v1h-1zM1061 257h1v1h-1zM1080 257h1v1h-1zM1098 257h1v1h-1zM1117 257h1v1h-1zM1136 257h1v1h-1zM1154 257h1v1h-1zM1173 257h1v1h-1zM1191 257h1v1h-1zM1210 257h1v1h-1zM1229 257h1v1h-1zM1247 257h1v1h-1zM1266 257h1v1h-1zM1284 257h1v1h-1zM1303 257h1v1h-1zM1322 257h1v1h-1zM1340 257h1v1h-1zM1359 257h1v1h-1zM1377 257h1v1h-1zM1396 257h1v1h-1zM1415 257h1v1h-1zM1433 257h1v1h-1zM1452 257h1v1h-1zM1470 257h1v1h-1zM1489 257h1v1h-1zM1508 257h1v1h-1zM1526 257h1v1h-1zM1545 257h1v1h-1zM1563 257h1v1h-1zM1582 257h1v1h-1zM1601 257h1v1h-1zM1619 257h1v1h-1zM1638 257h1v1h-1zM1656 257h1v1h-1zM169 275h1v1h-1zM188 275h1v1h-1zM207 275h1v1h-1zM225 275h1v1h-1zM244 275h1v1h-1zM262 275h1v1h-1zM281 275h1v1h-1zM300 275h1v1h-1zM318 275h1v1h-1zM337 275h1v1h-1zM355 275h1v1h-1zM374 275h1v1h-1zM393 275h1v1h-1zM411 275h1v1h-1zM430 275h1v1h-1zM448 275h1v1h-1zM467 275h1v1h-1zM486 275h1v1h-1zM504 275h1v1h-1zM523 275h1v1h-1zM541 275h1v1h-1zM560 275h1v1h-1zM579 275h1v1h-1zM597 275h1v1h-1zM616 275h1v1h-1zM634 275h1v1h-1zM653 275h1v1h-1zM672 275h1v1h-1zM690 275h1v1h-1zM709 275h1v1h-1zM727 275h1v1h-1zM746 275h1v1h-1zM765 275h1v1h-1zM783 275h1v1h-1zM802 275h1v1h-1zM820 275h1v1h-1zM839 275h1v1h-1zM858 275h1v1h-1zM876 275h1v1h-1zM895 275h1v1h-1zM913 275h1v1h-1zM931 275h1v1h-1zM950 275h1v1h-1zM968 275h1v1h-1zM987 275h1v1h-1zM1005 275h1v1h-1zM1024 275h1v1h-1zM1043 275h1v1h-1zM1061 275h1v1h-1zM1080 275h1v1h-1zM1098 275h1v1h-1zM1117 275h1v1h-1zM1136 275h1v1h-1zM1154 275h1v1h-1zM1173 275h1v1h-1zM1191 275h1v1h-1zM1210 275h1v1h-1zM1229 275h1v1h-1zM1247 275h1v1h-1zM1266 275h1v1h-1zM1284 275h1v1h-1zM1303 275h1v1h-1zM1322 275h1v1h-1zM1340 275h1v1h-1zM1359 275h1v1h-1zM1377 275h1v1h-1zM1396 275h1v1h-1zM1415 275h1v1h-1zM1433 275h1v1h-1zM1452 275h1v1h-1zM1470 275h1v1h-1zM1489 275h1v1h-1zM1508 275h1v1h-1zM1526 275h1v1h-1zM1545 275h1v1h-1zM1563 275h1v1h-1zM1582 275h1v1h-1zM1601 275h1v1h-1zM1619 275h1v1h-1zM1638 275h1v1h-1zM1656 275h1v1h-1zM169 294h1v1h-1zM188 294h1v1h-1zM207 294h1v1h-1zM225 294h1v1h-1zM244 294h1v1h-1zM262 294h1v1h-1zM281 294h1v1h-1zM300 294h1v1h-1zM318 294h1v1h-1zM337 294h1v1h-1zM355 294h1v1h-1zM374 294h1v1h-1zM393 294h1v1h-1zM411 294h1v1h-1zM430 294h1v1h-1zM448 294h1v1h-1zM467 294h1v1h-1zM486 294h1v1h-1zM504 294h1v1h-1zM523 294h1v1h-1zM541 294h1v1h-1zM560 294h1v1h-1zM579 294h1v1h-1zM597 294h1v1h-1zM616 294h1v1h-1zM634 294h1v1h-1zM653 294h1v1h-1zM672 294h1v1h-1zM690 294h1v1h-1zM709 294h1v1h-1zM727 294h1v1h-1zM746 294h1v1h-1zM765 294h1v1h-1zM783 294h1v1h-1zM802 294h1v1h-1zM820 294h1v1h-1zM839 294h1v1h-1zM858 294h1v1h-1zM876 294h1v1h-1zM895 294h1v1h-1zM913 294h1v1h-1zM931 294h1v1h-1zM950 294h1v1h-1zM968 294h1v1h-1zM987 294h1v1h-1zM1005 294h1v1h-1zM1024 294h1v1h-1zM1043 294h1v1h-1zM1061 294h1v1h-1zM1080 294h1v1h-1zM1098 294h1v1h-1zM1117 294h1v1h-1zM1136 294h1v1h-1zM1154 294h1v1h-1zM1173 294h1v1h-1zM1191 294h1v1h-1zM1210 294h1v1h-1zM1229 294h1v1h-1zM1247 294h1v1h-1zM1266 294h1v1h-1zM1284 294h1v1h-1zM1303 294h1v1h-1zM1322 294h1v1h-1zM1340 294h1v1h-1zM1359 294h1v1h-1zM1377 294h1v1h-1zM1396 294h1v1h-1zM1415 294h1v1h-1zM1433 294h1v1h-1zM1452 294h1v1h-1zM1470 294h1v1h-1zM1489 294h1v1h-1zM1508 294h1v1h-1zM1526 294h1v1h-1zM1545 294h1v1h-1zM1563 294h1v1h-1zM1582 294h1v1h-1zM1601 294h1v1h-1zM1619 294h1v1h-1zM1638 294h1v1h-1zM1656 294h1v1h-1zM169 312h1v1h-1zM188 312h1v1h-1zM207 312h1v1h-1zM225 312h1v1h-1zM244 312h1v1h-1zM262 312h1v1h-1zM281 312h1v1h-1zM300 312h1v1h-1zM318 312h1v1h-1zM337 312h1v1h-1zM355 312h1v1h-1zM374 312h1v1h-1zM393 312h1v1h-1zM411 312h1v1h-1zM430 312h1v1h-1zM448 312h1v1h-1zM467 312h1v1h-1zM486 312h1v1h-1zM504 312h1v1h-1zM523 312h1v1h-1zM541 312h1v1h-1zM560 312h1v1h-1zM579 312h1v1h-1zM597 312h1v1h-1zM616 312h1v1h-1zM634 312h1v1h-1zM653 312h1v1h-1zM672 312h1v1h-1zM690 312h1v1h-1zM709 312h1v1h-1zM727 312h1v1h-1zM746 312h1v1h-1zM765 312h1v1h-1zM783 312h1v1h-1zM802 312h1v1h-1zM820 312h1v1h-1zM839 312h1v1h-1zM858 312h1v1h-1zM876 312h1v1h-1zM895 312h1v1h-1zM913 312h1v1h-1zM931 312h1v1h-1zM950 312h1v1h-1zM968 312h1v1h-1zM987 312h1v1h-1zM1005 312h1v1h-1zM1024 312h1v1h-1zM1043 312h1v1h-1zM1061 312h1v1h-1zM1080 312h1v1h-1zM1098 312h1v1h-1zM1117 312h1v1h-1zM1136 312h1v1h-1zM1154 312h1v1h-1zM1173 312h1v1h-1zM1191 312h1v1h-1zM1210 312h1v1h-1zM1229 312h1v1h-1zM1247 312h1v1h-1zM1266 312h1v1h-1zM1284 312h1v1h-1zM1303 312h1v1h-1zM1322 312h1v1h-1zM1340 312h1v1h-1zM1359 312h1v1h-1zM1377 312h1v1h-1zM1396 312h1v1h-1zM1415 312h1v1h-1zM1433 312h1v1h-1zM1452 312h1v1h-1zM1470 312h1v1h-1zM1489 312h1v1h-1zM1508 312h1v1h-1zM1526 312h1v1h-1zM1545 312h1v1h-1zM1563 312h1v1h-1zM1582 312h1v1h-1zM1601 312h1v1h-1zM1619 312h1v1h-1zM1638 312h1v1h-1zM1656 312h1v1h-1zM169 331h1v1h-1zM188 331h1v1h-1zM207 331h1v1h-1zM225 331h1v1h-1zM244 331h1v1h-1zM262 331h1v1h-1zM281 331h1v1h-1zM300 331h1v1h-1zM318 331h1v1h-1zM337 331h1v1h-1zM355 331h1v1h-1zM374 331h1v1h-1zM393 331h1v1h-1zM411 331h1v1h-1zM430 331h1v1h-1zM448 331h1v1h-1zM467 331h1v1h-1zM486 331h1v1h-1zM504 331h1v1h-1zM523 331h1v1h-1zM541 331h1v1h-1zM560 331h1v1h-1zM579 331h1v1h-1zM597 331h1v1h-1zM616 331h1v1h-1zM634 331h1v1h-1zM653 331h1v1h-1zM672 331h1v1h-1zM690 331h1v1h-1zM709 331h1v1h-1zM727 331h1v1h-1zM746 331h1v1h-1zM765 331h1v1h-1zM783 331h1v1h-1zM802 331h1v1h-1zM820 331h1v1h-1zM839 331h1v1h-1zM858 331h1v1h-1zM876 331h1v1h-1zM895 331h1v1h-1zM913 331h1v1h-1zM931 331h1v1h-1zM950 331h1v1h-1zM968 331h1v1h-1zM987 331h1v1h-1zM1005 331h1v1h-1zM1024 331h1v1h-1zM1043 331h1v1h-1zM1061 331h1v1h-1zM1080 331h1v1h-1zM1098 331h1v1h-1zM1117 331h1v1h-1zM1136 331h1v1h-1zM1154 331h1v1h-1zM1173 331h1v1h-1zM1191 331h1v1h-1zM1210 331h1v1h-1zM1229 331h1v1h-1zM1247 331h1v1h-1zM1266 331h1v1h-1zM1284 331h1v1h-1zM1303 331h1v1h-1zM1322 331h1v1h-1zM1340 331h1v1h-1zM1359 331h1v1h-1zM1377 331h1v1h-1zM1396 331h1v1h-1zM1415 331h1v1h-1zM1433 331h1v1h-1zM1452 331h1v1h-1zM1470 331h1v1h-1zM1489 331h1v1h-1zM1508 331h1v1h-1zM1526 331h1v1h-1zM1545 331h1v1h-1zM1563 331h1v1h-1zM1582 331h1v1h-1zM1601 331h1v1h-1zM1619 331h1v1h-1zM1638 331h1v1h-1zM1656 331h1v1h-1zM169 350h1v1h-1zM188 350h1v1h-1zM207 350h1v1h-1zM225 350h1v1h-1zM244 350h1v1h-1zM262 350h1v1h-1zM281 350h1v1h-1zM300 350h1v1h-1zM318 350h1v1h-1zM337 350h1v1h-1zM355 350h1v1h-1zM374 350h1v1h-1zM393 350h1v1h-1zM411 350h1v1h-1zM430 350h1v1h-1zM448 350h1v1h-1zM467 350h1v1h-1zM486 350h1v1h-1zM504 350h1v1h-1zM523 350h1v1h-1zM541 350h1v1h-1zM560 350h1v1h-1zM579 350h1v1h-1zM597 350h1v1h-1zM616 350h1v1h-1zM634 350h1v1h-1zM653 350h1v1h-1zM672 350h1v1h-1zM690 350h1v1h-1zM709 350h1v1h-1zM727 350h1v1h-1zM746 350h1v1h-1zM765 350h1v1h-1zM783 350h1v1h-1zM802 350h1v1h-1zM820 350h1v1h-1zM839 350h1v1h-1zM858 350h1v1h-1zM876 350h1v1h-1zM895 350h1v1h-1zM913 350h1v1h-1zM931 350h1v1h-1zM950 350h1v1h-1zM968 350h1v1h-1zM987 350h1v1h-1zM1005 350h1v1h-1zM1024 350h1v1h-1zM1043 350h1v1h-1zM1061 350h1v1h-1zM1080 350h1v1h-1zM1098 350h1v1h-1zM1117 350h1v1h-1zM1136 350h1v1h-1zM1154 350h1v1h-1zM1173 350h1v1h-1zM1191 350h1v1h-1zM1210 350h1v1h-1zM1229 350h1v1h-1zM1247 350h1v1h-1zM1266 350h1v1h-1zM1284 350h1v1h-1zM1303 350h1v1h-1zM1322 350h1v1h-1zM1340 350h1v1h-1zM1359 350h1v1h-1zM1377 350h1v1h-1zM1396 350h1v1h-1zM1415 350h1v1h-1zM1433 350h1v1h-1zM1452 350h1v1h-1zM1470 350h1v1h-1zM1489 350h1v1h-1zM1508 350h1v1h-1zM1526 350h1v1h-1zM1545 350h1v1h-1zM1563 350h1v1h-1zM1582 350h1v1h-1zM1601 350h1v1h-1zM1619 350h1v1h-1zM1638 350h1v1h-1zM1656 350h1v1h-1zM169 368h1v1h-1zM188 368h1v1h-1zM207 368h1v1h-1zM225 368h1v1h-1zM244 368h1v1h-1zM262 368h1v1h-1zM281 368h1v1h-1zM300 368h1v1h-1zM318 368h1v1h-1zM337 368h1v1h-1zM355 368h1v1h-1zM374 368h1v1h-1zM393 368h1v1h-1zM411 368h1v1h-1zM430 368h1v1h-1zM448 368h1v1h-1zM467 368h1v1h-1zM486 368h1v1h-1zM504 368h1v1h-1zM523 368h1v1h-1zM541 368h1v1h-1zM560 368h1v1h-1zM579 368h1v1h-1zM597 368h1v1h-1zM616 368h1v1h-1zM634 368h1v1h-1zM653 368h1v1h-1zM672 368h1v1h-1zM690 368h1v1h-1zM709 368h1v1h-1zM727 368h1v1h-1zM746 368h1v1h-1zM765 368h1v1h-1zM783 368h1v1h-1zM802 368h1v1h-1zM820 368h1v1h-1zM839 368h1v1h-1zM858 368h1v1h-1zM876 368h1v1h-1zM895 368h1v1h-1zM913 368h1v1h-1zM931 368h1v1h-1zM950 368h1v1h-1zM968 368h1v1h-1zM987 368h1v1h-1zM1005 368h1v1h-1zM1024 368h1v1h-1zM1043 368h1v1h-1zM1061 368h1v1h-1zM1080 368h1v1h-1zM1098 368h1v1h-1zM1117 368h1v1h-1zM1136 368h1v1h-1zM1154 368h1v1h-1zM1173 368h1v1h-1zM1191 368h1v1h-1zM1210 368h1v1h-1zM1229 368h1v1h-1zM1247 368h1v1h-1zM1266 368h1v1h-1zM1284 368h1v1h-1zM1303 368h1v1h-1zM1322 368h1v1h-1zM1340 368h1v1h-1zM1359 368h1v1h-1zM1377 368h1v1h-1zM1396 368h1v1h-1zM1415 368h1v1h-1zM1433 368h1v1h-1zM1452 368h1v1h-1zM1470 368h1v1h-1zM1489 368h1v1h-1zM1508 368h1v1h-1zM1526 368h1v1h-1zM1545 368h1v1h-1zM1563 368h1v1h-1zM1582 368h1v1h-1zM1601 368h1v1h-1zM1619 368h1v1h-1zM1638 368h1v1h-1zM1656 368h1v1h-1zM169 387h1v1h-1zM188 387h1v1h-1zM207 387h1v1h-1zM225 387h1v1h-1zM244 387h1v1h-1zM262 387h1v1h-1zM281 387h1v1h-1zM300 387h1v1h-1zM318 387h1v1h-1zM337 387h1v1h-1zM355 387h1v1h-1zM374 387h1v1h-1zM393 387h1v1h-1zM411 387h1v1h-1zM430 387h1v1h-1zM448 387h1v1h-1zM467 387h1v1h-1zM486 387h1v1h-1zM504 387h1v1h-1zM523 387h1v1h-1zM541 387h1v1h-1zM560 387h1v1h-1zM579 387h1v1h-1zM597 387h1v1h-1zM616 387h1v1h-1zM634 387h1v1h-1zM653 387h1v1h-1zM672 387h1v1h-1zM690 387h1v1h-1zM709 387h1v1h-1zM727 387h1v1h-1zM746 387h1v1h-1zM765 387h1v1h-1zM783 387h1v1h-1zM802 387h1v1h-1zM820 387h1v1h-1zM839 387h1v1h-1zM858 387h1v1h-1zM876 387h1v1h-1zM895 387h1v1h-1zM913 387h1v1h-1zM931 387h1v1h-1zM950 387h1v1h-1zM968 387h1v1h-1zM987 387h1v1h-1zM1005 387h1v1h-1zM1024 387h1v1h-1zM1043 387h1v1h-1zM1061 387h1v1h-1zM1080 387h1v1h-1zM1098 387h1v1h-1zM1117 387h1v1h-1zM1136 387h1v1h-1zM1154 387h1v1h-1zM1173 387h1v1h-1zM1191 387h1v1h-1zM1210 387h1v1h-1zM1229 387h1v1h-1zM1247 387h1v1h-1zM1266 387h1v1h-1zM1284 387h1v1h-1zM1303 387h1v1h-1zM1322 387h1v1h-1zM1340 387h1v1h-1zM1359 387h1v1h-1zM1377 387h1v1h-1zM1396 387h1v1h-1zM1415 387h1v1h-1zM1433 387h1v1h-1zM1452 387h1v1h-1zM1470 387h1v1h-1zM1489 387h1v1h-1zM1508 387h1v1h-1zM1526 387h1v1h-1zM1545 387h1v1h-1zM1563 387h1v1h-1zM1582 387h1v1h-1zM1601 387h1v1h-1zM1619 387h1v1h-1zM1638 387h1v1h-1zM1656 387h1v1h-1zM169 405h1v1h-1zM188 405h1v1h-1zM207 405h1v1h-1zM225 405h1v1h-1zM244 405h1v1h-1zM262 405h1v1h-1zM281 405h1v1h-1zM300 405h1v1h-1zM318 405h1v1h-1zM337 405h1v1h-1zM355 405h1v1h-1zM374 405h1v1h-1zM393 405h1v1h-1zM411 405h1v1h-1zM430 405h1v1h-1zM448 405h1v1h-1zM467 405h1v1h-1zM486 405h1v1h-1zM504 405h1v1h-1zM523 405h1v1h-1zM541 405h1v1h-1zM560 405h1v1h-1zM579 405h1v1h-1zM597 405h1v1h-1zM616 405h1v1h-1zM634 405h1v1h-1zM653 405h1v1h-1zM672 405h1v1h-1zM690 405h1v1h-1zM709 405h1v1h-1zM727 405h1v1h-1zM746 405h1v1h-1zM765 405h1v1h-1zM783 405h1v1h-1zM802 405h1v1h-1zM820 405h1v1h-1zM839 405h1v1h-1zM858 405h1v1h-1zM876 405h1v1h-1zM895 405h1v1h-1zM913 405h1v1h-1zM931 405h1v1h-1zM950 405h1v1h-1zM968 405h1v1h-1zM987 405h1v1h-1zM1005 405h1v1h-1zM1024 405h1v1h-1zM1043 405h1v1h-1zM1061 405h1v1h-1zM1080 405h1v1h-1zM1098 405h1v1h-1zM1117 405h1v1h-1zM1136 405h1v1h-1zM1154 405h1v1h-1zM1173 405h1v1h-1zM1191 405h1v1h-1zM1210 405h1v1h-1zM1229 405h1v1h-1zM1247 405h1v1h-1zM1266 405h1v1h-1zM1284 405h1v1h-1zM1303 405h1v1h-1zM1322 405h1v1h-1zM1340 405h1v1h-1zM1359 405h1v1h-1zM1377 405h1v1h-1zM1396 405h1v1h-1zM1415 405h1v1h-1zM1433 405h1v1h-1zM1452 405h1v1h-1zM1470 405h1v1h-1zM1489 405h1v1h-1zM1508 405h1v1h-1zM1526 405h1v1h-1zM1545 405h1v1h-1zM1563 405h1v1h-1zM1582 405h1v1h-1zM1601 405h1v1h-1zM1619 405h1v1h-1zM1638 405h1v1h-1zM1656 405h1v1h-1zM169 424h1v1h-1zM188 424h1v1h-1zM207 424h1v1h-1zM225 424h1v1h-1zM244 424h1v1h-1zM262 424h1v1h-1zM281 424h1v1h-1zM300 424h1v1h-1zM318 424h1v1h-1zM337 424h1v1h-1zM355 424h1v1h-1zM374 424h1v1h-1zM393 424h1v1h-1zM411 424h1v1h-1zM430 424h1v1h-1zM448 424h1v1h-1zM467 424h1v1h-1zM486 424h1v1h-1zM504 424h1v1h-1zM523 424h1v1h-1zM541 424h1v1h-1zM560 424h1v1h-1zM579 424h1v1h-1zM597 424h1v1h-1zM616 424h1v1h-1zM634 424h1v1h-1zM653 424h1v1h-1zM672 424h1v1h-1zM690 424h1v1h-1zM709 424h1v1h-1zM727 424h1v1h-1zM746 424h1v1h-1zM765 424h1v1h-1zM783 424h1v1h-1zM802 424h1v1h-1zM820 424h1v1h-1zM839 424h1v1h-1zM858 424h1v1h-1zM876 424h1v1h-1zM895 424h1v1h-1zM913 424h1v1h-1zM931 424h1v1h-1zM950 424h1v1h-1zM968 424h1v1h-1zM987 424h1v1h-1zM1005 424h1v1h-1zM1024 424h1v1h-1zM1043 424h1v1h-1zM1061 424h1v1h-1zM1080 424h1v1h-1zM1098 424h1v1h-1zM1117 424h1v1h-1zM1136 424h1v1h-1zM1154 424h1v1h-1zM1173 424h1v1h-1zM1191 424h1v1h-1zM1210 424h1v1h-1zM1229 424h1v1h-1zM1247 424h1v1h-1zM1266 424h1v1h-1zM1284 424h1v1h-1zM1303 424h1v1h-1zM1322 424h1v1h-1zM1340 424h1v1h-1zM1359 424h1v1h-1zM1377 424h1v1h-1zM1396 424h1v1h-1zM1415 424h1v1h-1zM1433 424h1v1h-1zM1452 424h1v1h-1zM1470 424h1v1h-1zM1489 424h1v1h-1zM1508 424h1v1h-1zM1526 424h1v1h-1zM1545 424h1v1h-1zM1563 424h1v1h-1zM1582 424h1v1h-1zM1601 424h1v1h-1zM1619 424h1v1h-1zM1638 424h1v1h-1zM1656 424h1v1h-1zM169 443h1v1h-1zM188 443h1v1h-1zM207 443h1v1h-1zM225 443h1v1h-1zM244 443h1v1h-1zM262 443h1v1h-1zM281 443h1v1h-1zM300 443h1v1h-1zM318 443h1v1h-1zM337 443h1v1h-1zM355 443h1v1h-1zM374 443h1v1h-1zM393 443h1v1h-1zM411 443h1v1h-1zM430 443h1v1h-1zM448 443h1v1h-1zM467 443h1v1h-1zM486 443h1v1h-1zM504 443h1v1h-1zM523 443h1v1h-1zM541 443h1v1h-1zM560 443h1v1h-1zM579 443h1v1h-1zM597 443h1v1h-1zM616 443h1v1h-1zM634 443h1v1h-1zM653 443h1v1h-1zM672 443h1v1h-1zM690 443h1v1h-1zM709 443h1v1h-1zM727 443h1v1h-1zM746 443h1v1h-1zM765 443h1v1h-1zM783 443h1v1h-1zM802 443h1v1h-1zM820 443h1v1h-1zM839 443h1v1h-1zM858 443h1v1h-1zM876 443h1v1h-1zM895 443h1v1h-1zM913 443h1v1h-1zM931 443h1v1h-1zM950 443h1v1h-1zM968 443h1v1h-1zM987 443h1v1h-1zM1005 443h1v1h-1zM1024 443h1v1h-1zM1043 443h1v1h-1zM1061 443h1v1h-1zM1080 443h1v1h-1zM1098 443h1v1h-1zM1117 443h1v1h-1zM1136 443h1v1h-1zM1154 443h1v1h-1zM1173 443h1v1h-1zM1191 443h1v1h-1zM1210 443h1v1h-1zM1229 443h1v1h-1zM1247 443h1v1h-1zM1266 443h1v1h-1zM1284 443h1v1h-1zM1303 443h1v1h-1zM1322 443h1v1h-1zM1340 443h1v1h-1zM1359 443h1v1h-1zM1377 443h1v1h-1zM1396 443h1v1h-1zM1415 443h1v1h-1zM1433 443h1v1h-1zM1452 443h1v1h-1zM1470 443h1v1h-1zM1489 443h1v1h-1zM1508 443h1v1h-1zM1526 443h1v1h-1zM1545 443h1v1h-1zM1563 443h1v1h-1zM1582 443h1v1h-1zM1601 443h1v1h-1zM1619 443h1v1h-1zM1638 443h1v1h-1zM1656 443h1v1h-1zM169 461h1v1h-1zM188 461h1v1h-1zM207 461h1v1h-1zM225 461h1v1h-1zM244 461h1v1h-1zM262 461h1v1h-1zM281 461h1v1h-1zM300 461h1v1h-1zM318 461h1v1h-1zM337 461h1v1h-1zM355 461h1v1h-1zM374 461h1v1h-1zM393 461h1v1h-1zM411 461h1v1h-1zM430 461h1v1h-1zM448 461h1v1h-1zM467 461h1v1h-1zM486 461h1v1h-1zM504 461h1v1h-1zM523 461h1v1h-1zM541 461h1v1h-1zM560 461h1v1h-1zM579 461h1v1h-1zM597 461h1v1h-1zM616 461h1v1h-1zM634 461h1v1h-1zM653 461h1v1h-1zM672 461h1v1h-1zM690 461h1v1h-1zM709 461h1v1h-1zM727 461h1v1h-1zM746 461h1v1h-1zM765 461h1v1h-1zM783 461h1v1h-1zM802 461h1v1h-1zM820 461h1v1h-1zM839 461h1v1h-1zM858 461h1v1h-1zM876 461h1v1h-1zM895 461h1v1h-1zM913 461h1v1h-1zM931 461h1v1h-1zM950 461h1v1h-1zM968 461h1v1h-1zM987 461h1v1h-1zM1005 461h1v1h-1zM1024 461h1v1h-1zM1043 461h1v1h-1zM1061 461h1v1h-1zM1080 461h1v1h-1zM1098 461h1v1h-1zM1117 461h1v1h-1zM1136 461h1v1h-1zM1154 461h1v1h-1zM1173 461h1v1h-1zM1191 461h1v1h-1zM1210 461h1v1h-1zM1229 461h1v1h-1zM1247 461h1v1h-1zM1266 461h1v1h-1zM1284 461h1v1h-1zM1303 461h1v1h-1zM1322 461h1v1h-1zM1340 461h1v1h-1zM1359 461h1v1h-1zM1377 461h1v1h-1zM1396 461h1v1h-1zM1415 461h1v1h-1zM1433 461h1v1h-1zM1452 461h1v1h-1zM1470 461h1v1h-1zM1489 461h1v1h-1zM1508 461h1v1h-1zM1526 461h1v1h-1zM1545 461h1v1h-1zM1563 461h1v1h-1zM1582 461h1v1h-1zM1601 461h1v1h-1zM1619 461h1v1h-1zM1638 461h1v1h-1zM1656 461h1v1h-1zM169 480h1v1h-1zM188 480h1v1h-1zM207 480h1v1h-1zM225 480h1v1h-1zM244 480h1v1h-1zM262 480h1v1h-1zM281 480h1v1h-1zM300 480h1v1h-1zM318 480h1v1h-1zM337 480h1v1h-1zM355 480h1v1h-1zM374 480h1v1h-1zM393 480h1v1h-1zM411 480h1v1h-1zM430 480h1v1h-1zM448 480h1v1h-1zM467 480h1v1h-1zM486 480h1v1h-1zM504 480h1v1h-1zM523 480h1v1h-1zM541 480h1v1h-1zM560 480h1v1h-1zM579 480h1v1h-1zM597 480h1v1h-1zM616 480h1v1h-1zM634 480h1v1h-1zM653 480h1v1h-1zM672 480h1v1h-1zM690 480h1v1h-1zM709 480h1v1h-1zM727 480h1v1h-1zM746 480h1v1h-1zM765 480h1v1h-1zM783 480h1v1h-1zM802 480h1v1h-1zM820 480h1v1h-1zM839 480h1v1h-1zM858 480h1v1h-1zM876 480h1v1h-1zM895 480h1v1h-1zM913 480h1v1h-1zM931 480h1v1h-1zM950 480h1v1h-1zM968 480h1v1h-1zM987 480h1v1h-1zM1005 480h1v1h-1zM1024 480h1v1h-1zM1043 480h1v1h-1zM1061 480h1v1h-1zM1080 480h1v1h-1zM1098 480h1v1h-1zM1117 480h1v1h-1zM1136 480h1v1h-1zM1154 480h1v1h-1zM1173 480h1v1h-1zM1191 480h1v1h-1zM1210 480h1v1h-1zM1229 480h1v1h-1zM1247 480h1v1h-1zM1266 480h1v1h-1zM1284 480h1v1h-1zM1303 480h1v1h-1zM1322 480h1v1h-1zM1340 480h1v1h-1zM1359 480h1v1h-1zM1377 480h1v1h-1zM1396 480h1v1h-1zM1415 480h1v1h-1zM1433 480h1v1h-1zM1452 480h1v1h-1zM1470 480h1v1h-1zM1489 480h1v1h-1zM1508 480h1v1h-1zM1526 480h1v1h-1zM1545 480h1v1h-1zM1563 480h1v1h-1zM1582 480h1v1h-1zM1601 480h1v1h-1zM1619 480h1v1h-1zM1638 480h1v1h-1zM1656 480h1v1h-1zM169 498h1v1h-1zM188 498h1v1h-1zM207 498h1v1h-1zM225 498h1v1h-1zM244 498h1v1h-1zM262 498h1v1h-1zM281 498h1v1h-1zM300 498h1v1h-1zM318 498h1v1h-1zM337 498h1v1h-1zM355 498h1v1h-1zM374 498h1v1h-1zM393 498h1v1h-1zM411 498h1v1h-1zM430 498h1v1h-1zM448 498h1v1h-1zM467 498h1v1h-1zM486 498h1v1h-1zM504 498h1v1h-1zM523 498h1v1h-1zM541 498h1v1h-1zM560 498h1v1h-1zM579 498h1v1h-1zM597 498h1v1h-1zM616 498h1v1h-1zM634 498h1v1h-1zM653 498h1v1h-1zM672 498h1v1h-1zM690 498h1v1h-1zM709 498h1v1h-1zM727 498h1v1h-1zM746 498h1v1h-1zM765 498h1v1h-1zM783 498h1v1h-1zM802 498h1v1h-1zM820 498h1v1h-1zM839 498h1v1h-1zM858 498h1v1h-1zM876 498h1v1h-1zM895 498h1v1h-1zM913 498h1v1h-1zM931 498h1v1h-1zM950 498h1v1h-1zM968 498h1v1h-1zM987 498h1v1h-1zM1005 498h1v1h-1zM1024 498h1v1h-1zM1043 498h1v1h-1zM1061 498h1v1h-1zM1080 498h1v1h-1zM1098 498h1v1h-1zM1117 498h1v1h-1zM1136 498h1v1h-1zM1154 498h1v1h-1zM1173 498h1v1h-1zM1191 498h1v1h-1zM1210 498h1v1h-1zM1229 498h1v1h-1zM1247 498h1v1h-1zM1266 498h1v1h-1zM1284 498h1v1h-1zM1303 498h1v1h-1zM1322 498h1v1h-1zM1340 498h1v1h-1zM1359 498h1v1h-1zM1377 498h1v1h-1zM1396 498h1v1h-1zM1415 498h1v1h-1zM1433 498h1v1h-1zM1452 498h1v1h-1zM1470 498h1v1h-1zM1489 498h1v1h-1zM1508 498h1v1h-1zM1526 498h1v1h-1zM1545 498h1v1h-1zM1563 498h1v1h-1zM1582 498h1v1h-1zM1601 498h1v1h-1zM1619 498h1v1h-1zM1638 498h1v1h-1zM1656 498h1v1h-1zM169 517h1v1h-1zM188 517h1v1h-1zM207 517h1v1h-1zM225 517h1v1h-1zM244 517h1v1h-1zM262 517h1v1h-1zM281 517h1v1h-1zM300 517h1v1h-1zM318 517h1v1h-1zM337 517h1v1h-1zM355 517h1v1h-1zM374 517h1v1h-1zM393 517h1v1h-1zM411 517h1v1h-1zM430 517h1v1h-1zM448 517h1v1h-1zM467 517h1v1h-1zM486 517h1v1h-1zM504 517h1v1h-1zM523 517h1v1h-1zM541 517h1v1h-1zM560 517h1v1h-1zM579 517h1v1h-1zM597 517h1v1h-1zM616 517h1v1h-1zM634 517h1v1h-1zM653 517h1v1h-1zM672 517h1v1h-1zM690 517h1v1h-1zM709 517h1v1h-1zM727 517h1v1h-1zM746 517h1v1h-1zM765 517h1v1h-1zM783 517h1v1h-1zM802 517h1v1h-1zM820 517h1v1h-1zM839 517h1v1h-1zM858 517h1v1h-1zM876 517h1v1h-1zM895 517h1v1h-1zM913 517h1v1h-1zM931 517h1v1h-1zM950 517h1v1h-1zM968 517h1v1h-1zM987 517h1v1h-1zM1005 517h1v1h-1zM1024 517h1v1h-1zM1043 517h1v1h-1zM1061 517h1v1h-1zM1080 517h1v1h-1zM1098 517h1v1h-1zM1117 517h1v1h-1zM1136 517h1v1h-1zM1154 517h1v1h-1zM1173 517h1v1h-1zM1191 517h1v1h-1zM1210 517h1v1h-1zM1229 517h1v1h-1zM1247 517h1v1h-1zM1266 517h1v1h-1zM1284 517h1v1h-1zM1303 517h1v1h-1zM1322 517h1v1h-1zM1340 517h1v1h-1zM1359 517h1v1h-1zM1377 517h1v1h-1zM1396 517h1v1h-1zM1415 517h1v1h-1zM1433 517h1v1h-1zM1452 517h1v1h-1zM1470 517h1v1h-1zM1489 517h1v1h-1zM1508 517h1v1h-1zM1526 517h1v1h-1zM1545 517h1v1h-1zM1563 517h1v1h-1zM1582 517h1v1h-1zM1601 517h1v1h-1zM1619 517h1v1h-1zM1638 517h1v1h-1zM1656 517h1v1h-1zM169 535h1v1h-1zM188 535h1v1h-1zM207 535h1v1h-1zM225 535h1v1h-1zM244 535h1v1h-1zM262 535h1v1h-1zM281 535h1v1h-1zM300 535h1v1h-1zM318 535h1v1h-1zM337 535h1v1h-1zM355 535h1v1h-1zM374 535h1v1h-1zM393 535h1v1h-1zM411 535h1v1h-1zM430 535h1v1h-1zM448 535h1v1h-1zM467 535h1v1h-1zM486 535h1v1h-1zM504 535h1v1h-1zM523 535h1v1h-1zM541 535h1v1h-1zM560 535h1v1h-1zM579 535h1v1h-1zM597 535h1v1h-1zM616 535h1v1h-1zM634 535h1v1h-1zM653 535h1v1h-1zM672 535h1v1h-1zM690 535h1v1h-1zM709 535h1v1h-1zM727 535h1v1h-1zM746 535h1v1h-1zM765 535h1v1h-1zM783 535h1v1h-1zM802 535h1v1h-1zM820 535h1v1h-1zM839 535h1v1h-1zM858 535h1v1h-1zM876 535h1v1h-1zM895 535h1v1h-1zM913 535h1v1h-1zM931 535h1v1h-1zM950 535h1v1h-1zM968 535h1v1h-1zM987 535h1v1h-1zM1005 535h1v1h-1zM1024 535h1v1h-1zM1043 535h1v1h-1zM1061 535h1v1h-1zM1080 535h1v1h-1zM1098 535h1v1h-1zM1117 535h1v1h-1zM1136 535h1v1h-1zM1154 535h1v1h-1zM1173 535h1v1h-1zM1191 535h1v1h-1zM1210 535h1v1h-1zM1229 535h1v1h-1zM1247 535h1v1h-1zM1266 535h1v1h-1zM1284 535h1v1h-1zM1303 535h1v1h-1zM1322 535h1v1h-1zM1340 535h1v1h-1zM1359 535h1v1h-1zM1377 535h1v1h-1zM1396 535h1v1h-1zM1415 535h1v1h-1zM1433 535h1v1h-1zM1452 535h1v1h-1zM1470 535h1v1h-1zM1489 535h1v1h-1zM1508 535h1v1h-1zM1526 535h1v1h-1zM1545 535h1v1h-1zM1563 535h1v1h-1zM1582 535h1v1h-1zM1601 535h1v1h-1zM1619 535h1v1h-1zM1638 535h1v1h-1zM1656 535h1v1h-1zM169 553h1v1h-1zM188 553h1v1h-1zM207 553h1v1h-1zM225 553h1v1h-1zM244 553h1v1h-1zM262 553h1v1h-1zM281 553h1v1h-1zM300 553h1v1h-1zM318 553h1v1h-1zM337 553h1v1h-1zM355 553h1v1h-1zM374 553h1v1h-1zM393 553h1v1h-1zM411 553h1v1h-1zM430 553h1v1h-1zM448 553h1v1h-1zM467 553h1v1h-1zM486 553h1v1h-1zM504 553h1v1h-1zM523 553h1v1h-1zM541 553h1v1h-1zM560 553h1v1h-1zM579 553h1v1h-1zM597 553h1v1h-1zM616 553h1v1h-1zM634 553h1v1h-1zM653 553h1v1h-1zM672 553h1v1h-1zM690 553h1v1h-1zM709 553h1v1h-1zM727 553h1v1h-1zM746 553h1v1h-1zM765 553h1v1h-1zM783 553h1v1h-1zM802 553h1v1h-1zM820 553h1v1h-1zM839 553h1v1h-1zM858 553h1v1h-1zM876 553h1v1h-1zM895 553h1v1h-1zM913 553h1v1h-1zM931 553h1v1h-1zM950 553h1v1h-1zM968 553h1v1h-1zM987 553h1v1h-1zM1005 553h1v1h-1zM1024 553h1v1h-1zM1043 553h1v1h-1zM1061 553h1v1h-1zM1080 553h1v1h-1zM1098 553h1v1h-1zM1117 553h1v1h-1zM1136 553h1v1h-1zM1154 553h1v1h-1zM1173 553h1v1h-1zM1191 553h1v1h-1zM1210 553h1v1h-1zM1229 553h1v1h-1zM1247 553h1v1h-1zM1266 553h1v1h-1zM1284 553h1v1h-1zM1303 553h1v1h-1zM1322 553h1v1h-1zM1340 553h1v1h-1zM1359 553h1v1h-1zM1377 553h1v1h-1zM1396 553h1v1h-1zM1415 553h1v1h-1zM1433 553h1v1h-1zM1452 553h1v1h-1zM1470 553h1v1h-1zM1489 553h1v1h-1zM1508 553h1v1h-1zM1526 553h1v1h-1zM1545 553h1v1h-1zM1563 553h1v1h-1zM1582 553h1v1h-1zM1601 553h1v1h-1zM1619 553h1v1h-1zM1638 553h1v1h-1zM1656 553h1v1h-1zM169 572h1v1h-1zM188 572h1v1h-1zM207 572h1v1h-1zM225 572h1v1h-1zM244 572h1v1h-1zM262 572h1v1h-1zM281 572h1v1h-1zM300 572h1v1h-1zM318 572h1v1h-1zM337 572h1v1h-1zM355 572h1v1h-1zM374 572h1v1h-1zM393 572h1v1h-1zM411 572h1v1h-1zM430 572h1v1h-1zM448 572h1v1h-1zM467 572h1v1h-1zM486 572h1v1h-1zM504 572h1v1h-1zM523 572h1v1h-1zM541 572h1v1h-1zM560 572h1v1h-1zM579 572h1v1h-1zM597 572h1v1h-1zM616 572h1v1h-1zM634 572h1v1h-1zM653 572h1v1h-1zM672 572h1v1h-1zM690 572h1v1h-1zM709 572h1v1h-1zM727 572h1v1h-1zM746 572h1v1h-1zM765 572h1v1h-1zM783 572h1v1h-1zM802 572h1v1h-1zM820 572h1v1h-1zM839 572h1v1h-1zM858 572h1v1h-1zM876 572h1v1h-1zM895 572h1v1h-1zM913 572h1v1h-1zM931 572h1v1h-1zM950 572h1v1h-1zM968 572h1v1h-1zM987 572h1v1h-1zM1005 572h1v1h-1zM1024 572h1v1h-1zM1043 572h1v1h-1zM1061 572h1v1h-1zM1080 572h1v1h-1zM1098 572h1v1h-1zM1117 572h1v1h-1zM1136 572h1v1h-1zM1154 572h1v1h-1zM1173 572h1v1h-1zM1191 572h1v1h-1zM1210 572h1v1h-1zM1229 572h1v1h-1zM1247 572h1v1h-1zM1266 572h1v1h-1zM1284 572h1v1h-1zM1303 572h1v1h-1zM1322 572h1v1h-1zM1340 572h1v1h-1zM1359 572h1v1h-1zM1377 572h1v1h-1zM1396 572h1v1h-1zM1415 572h1v1h-1zM1433 572h1v1h-1zM1452 572h1v1h-1zM1470 572h1v1h-1zM1489 572h1v1h-1zM1508 572h1v1h-1zM1526 572h1v1h-1zM1545 572h1v1h-1zM1563 572h1v1h-1zM1582 572h1v1h-1zM1601 572h1v1h-1zM1619 572h1v1h-1zM1638 572h1v1h-1zM1656 572h1v1h-1zM169 590h1v1h-1zM188 590h1v1h-1zM207 590h1v1h-1zM225 590h1v1h-1zM244 590h1v1h-1zM262 590h1v1h-1zM281 590h1v1h-1zM300 590h1v1h-1zM318 590h1v1h-1zM337 590h1v1h-1zM355 590h1v1h-1zM374 590h1v1h-1zM393 590h1v1h-1zM411 590h1v1h-1zM430 590h1v1h-1zM448 590h1v1h-1zM467 590h1v1h-1zM486 590h1v1h-1zM504 590h1v1h-1zM523 590h1v1h-1zM541 590h1v1h-1zM560 590h1v1h-1zM579 590h1v1h-1zM597 590h1v1h-1zM616 590h1v1h-1zM634 590h1v1h-1zM653 590h1v1h-1zM672 590h1v1h-1zM690 590h1v1h-1zM709 590h1v1h-1zM727 590h1v1h-1zM746 590h1v1h-1zM765 590h1v1h-1zM783 590h1v1h-1zM802 590h1v1h-1zM820 590h1v1h-1zM839 590h1v1h-1zM858 590h1v1h-1zM876 590h1v1h-1zM895 590h1v1h-1zM913 590h1v1h-1zM931 590h1v1h-1zM950 590h1v1h-1zM968 590h1v1h-1zM987 590h1v1h-1zM1005 590h1v1h-1zM1024 590h1v1h-1zM1043 590h1v1h-1zM1061 590h1v1h-1zM1080 590h1v1h-1zM1098 590h1v1h-1zM1117 590h1v1h-1zM1136 590h1v1h-1zM1154 590h1v1h-1zM1173 590h1v1h-1zM1191 590h1v1h-1zM1210 590h1v1h-1zM1229 590h1v1h-1zM1247 590h1v1h-1zM1266 590h1v1h-1zM1284 590h1v1h-1zM1303 590h1v1h-1zM1322 590h1v1h-1zM1340 590h1v1h-1zM1359 590h1v1h-1zM1377 590h1v1h-1zM1396 590h1v1h-1zM1415 590h1v1h-1zM1433 590h1v1h-1zM1452 590h1v1h-1zM1470 590h1v1h-1zM1489 590h1v1h-1zM1508 590h1v1h-1zM1526 590h1v1h-1zM1545 590h1v1h-1zM1563 590h1v1h-1zM1582 590h1v1h-1zM1601 590h1v1h-1zM1619 590h1v1h-1zM1638 590h1v1h-1zM1656 590h1v1h-1zM169 609h1v1h-1zM188 609h1v1h-1zM207 609h1v1h-1zM225 609h1v1h-1zM244 609h1v1h-1zM262 609h1v1h-1zM281 609h1v1h-1zM300 609h1v1h-1zM318 609h1v1h-1zM337 609h1v1h-1zM355 609h1v1h-1zM374 609h1v1h-1zM393 609h1v1h-1zM411 609h1v1h-1zM430 609h1v1h-1zM448 609h1v1h-1zM467 609h1v1h-1zM486 609h1v1h-1zM504 609h1v1h-1zM523 609h1v1h-1zM541 609h1v1h-1zM560 609h1v1h-1zM579 609h1v1h-1zM597 609h1v1h-1zM616 609h1v1h-1zM634 609h1v1h-1zM653 609h1v1h-1zM672 609h1v1h-1zM690 609h1v1h-1zM709 609h1v1h-1zM727 609h1v1h-1zM746 609h1v1h-1zM765 609h1v1h-1zM783 609h1v1h-1zM802 609h1v1h-1zM820 609h1v1h-1zM839 609h1v1h-1zM858 609h1v1h-1zM876 609h1v1h-1zM895 609h1v1h-1zM913 609h1v1h-1zM931 609h1v1h-1zM950 609h1v1h-1zM968 609h1v1h-1zM987 609h1v1h-1zM1005 609h1v1h-1zM1024 609h1v1h-1zM1043 609h1v1h-1zM1061 609h1v1h-1zM1080 609h1v1h-1zM1098 609h1v1h-1zM1117 609h1v1h-1zM1136 609h1v1h-1zM1154 609h1v1h-1zM1173 609h1v1h-1zM1191 609h1v1h-1zM1210 609h1v1h-1zM1229 609h1v1h-1zM1247 609h1v1h-1zM1266 609h1v1h-1zM1284 609h1v1h-1zM1303 609h1v1h-1zM1322 609h1v1h-1zM1340 609h1v1h-1zM1359 609h1v1h-1zM1377 609h1v1h-1zM1396 609h1v1h-1zM1415 609h1v1h-1zM1433 609h1v1h-1zM1452 609h1v1h-1zM1470 609h1v1h-1zM1489 609h1v1h-1zM1508 609h1v1h-1zM1526 609h1v1h-1zM1545 609h1v1h-1zM1563 609h1v1h-1zM1582 609h1v1h-1zM1601 609h1v1h-1zM1619 609h1v1h-1zM1638 609h1v1h-1zM1656 609h1v1h-1zM169 628h1v1h-1zM188 628h1v1h-1zM207 628h1v1h-1zM225 628h1v1h-1zM244 628h1v1h-1zM262 628h1v1h-1zM281 628h1v1h-1zM300 628h1v1h-1zM318 628h1v1h-1zM337 628h1v1h-1zM355 628h1v1h-1zM374 628h1v1h-1zM393 628h1v1h-1zM411 628h1v1h-1zM430 628h1v1h-1zM448 628h1v1h-1zM467 628h1v1h-1zM486 628h1v1h-1zM504 628h1v1h-1zM523 628h1v1h-1zM541 628h1v1h-1zM560 628h1v1h-1zM579 628h1v1h-1zM597 628h1v1h-1zM616 628h1v1h-1zM634 628h1v1h-1zM653 628h1v1h-1zM672 628h1v1h-1zM690 628h1v1h-1zM709 628h1v1h-1zM727 628h1v1h-1zM746 628h1v1h-1zM765 628h1v1h-1zM783 628h1v1h-1zM802 628h1v1h-1zM820 628h1v1h-1zM839 628h1v1h-1zM858 628h1v1h-1zM876 628h1v1h-1zM895 628h1v1h-1zM913 628h1v1h-1zM931 628h1v1h-1zM950 628h1v1h-1zM968 628h1v1h-1zM987 628h1v1h-1zM1005 628h1v1h-1zM1024 628h1v1h-1zM1043 628h1v1h-1zM1061 628h1v1h-1zM1080 628h1v1h-1zM1098 628h1v1h-1zM1117 628h1v1h-1zM1136 628h1v1h-1zM1154 628h1v1h-1zM1173 628h1v1h-1zM1191 628h1v1h-1zM1210 628h1v1h-1zM1229 628h1v1h-1zM1247 628h1v1h-1zM1266 628h1v1h-1zM1284 628h1v1h-1zM1303 628h1v1h-1zM1322 628h1v1h-1zM1340 628h1v1h-1zM1359 628h1v1h-1zM1377 628h1v1h-1zM1396 628h1v1h-1zM1415 628h1v1h-1zM1433 628h1v1h-1zM1452 628h1v1h-1zM1470 628h1v1h-1zM1489 628h1v1h-1zM1508 628h1v1h-1zM1526 628h1v1h-1zM1545 628h1v1h-1zM1563 628h1v1h-1zM1582 628h1v1h-1zM1601 628h1v1h-1zM1619 628h1v1h-1zM1638 628h1v1h-1zM1656 628h1v1h-1zM169 646h1v1h-1zM188 646h1v1h-1zM207 646h1v1h-1zM225 646h1v1h-1zM244 646h1v1h-1zM262 646h1v1h-1zM281 646h1v1h-1zM300 646h1v1h-1zM318 646h1v1h-1zM337 646h1v1h-1zM355 646h1v1h-1zM374 646h1v1h-1zM393 646h1v1h-1zM411 646h1v1h-1zM430 646h1v1h-1zM448 646h1v1h-1zM467 646h1v1h-1zM486 646h1v1h-1zM504 646h1v1h-1zM523 646h1v1h-1zM541 646h1v1h-1zM560 646h1v1h-1zM579 646h1v1h-1zM597 646h1v1h-1zM616 646h1v1h-1zM634 646h1v1h-1zM653 646h1v1h-1zM672 646h1v1h-1zM690 646h1v1h-1zM709 646h1v1h-1zM727 646h1v1h-1zM746 646h1v1h-1zM765 646h1v1h-1zM783 646h1v1h-1zM802 646h1v1h-1zM820 646h1v1h-1zM839 646h1v1h-1zM858 646h1v1h-1zM876 646h1v1h-1zM895 646h1v1h-1zM913 646h1v1h-1zM931 646h1v1h-1zM950 646h1v1h-1zM968 646h1v1h-1zM987 646h1v1h-1zM1005 646h1v1h-1zM1024 646h1v1h-1zM1043 646h1v1h-1zM1061 646h1v1h-1zM1080 646h1v1h-1zM1098 646h1v1h-1zM1117 646h1v1h-1zM1136 646h1v1h-1zM1154 646h1v1h-1zM1173 646h1v1h-1zM1191 646h1v1h-1zM1210 646h1v1h-1zM1229 646h1v1h-1zM1247 646h1v1h-1zM1266 646h1v1h-1zM1284 646h1v1h-1zM1303 646h1v1h-1zM1322 646h1v1h-1zM1340 646h1v1h-1zM1359 646h1v1h-1zM1377 646h1v1h-1zM1396 646h1v1h-1zM1415 646h1v1h-1zM1433 646h1v1h-1zM1452 646h1v1h-1zM1470 646h1v1h-1zM1489 646h1v1h-1zM1508 646h1v1h-1zM1526 646h1v1h-1zM1545 646h1v1h-1zM1563 646h1v1h-1zM1582 646h1v1h-1zM1601 646h1v1h-1zM1619 646h1v1h-1zM1638 646h1v1h-1zM1656 646h1v1h-1zM169 665h1v1h-1zM188 665h1v1h-1zM207 665h1v1h-1zM225 665h1v1h-1zM244 665h1v1h-1zM262 665h1v1h-1zM281 665h1v1h-1zM300 665h1v1h-1zM318 665h1v1h-1zM337 665h1v1h-1zM355 665h1v1h-1zM374 665h1v1h-1zM393 665h1v1h-1zM411 665h1v1h-1zM430 665h1v1h-1zM448 665h1v1h-1zM467 665h1v1h-1zM486 665h1v1h-1zM504 665h1v1h-1zM523 665h1v1h-1zM541 665h1v1h-1zM560 665h1v1h-1zM579 665h1v1h-1zM597 665h1v1h-1zM616 665h1v1h-1zM634 665h1v1h-1zM653 665h1v1h-1zM672 665h1v1h-1zM690 665h1v1h-1zM709 665h1v1h-1zM727 665h1v1h-1zM746 665h1v1h-1zM765 665h1v1h-1zM783 665h1v1h-1zM802 665h1v1h-1zM820 665h1v1h-1zM839 665h1v1h-1zM858 665h1v1h-1zM876 665h1v1h-1zM895 665h1v1h-1zM913 665h1v1h-1zM931 665h1v1h-1zM950 665h1v1h-1zM968 665h1v1h-1zM987 665h1v1h-1zM1005 665h1v1h-1zM1024 665h1v1h-1zM1043 665h1v1h-1zM1061 665h1v1h-1zM1080 665h1v1h-1zM1098 665h1v1h-1zM1117 665h1v1h-1zM1136 665h1v1h-1zM1154 665h1v1h-1zM1173 665h1v1h-1zM1191 665h1v1h-1zM1210 665h1v1h-1zM1229 665h1v1h-1zM1247 665h1v1h-1zM1266 665h1v1h-1zM1284 665h1v1h-1zM1303 665h1v1h-1zM1322 665h1v1h-1zM1340 665h1v1h-1zM1359 665h1v1h-1zM1377 665h1v1h-1zM1396 665h1v1h-1zM1415 665h1v1h-1zM1433 665h1v1h-1zM1452 665h1v1h-1zM1470 665h1v1h-1zM1489 665h1v1h-1zM1508 665h1v1h-1zM1526 665h1v1h-1zM1545 665h1v1h-1zM1563 665h1v1h-1zM1582 665h1v1h-1zM1601 665h1v1h-1zM1619 665h1v1h-1zM1638 665h1v1h-1zM1656 665h1v1h-1zM169 683h1v1h-1zM188 683h1v1h-1zM207 683h1v1h-1zM225 683h1v1h-1zM244 683h1v1h-1zM262 683h1v1h-1zM281 683h1v1h-1zM300 683h1v1h-1zM318 683h1v1h-1zM337 683h1v1h-1zM355 683h1v1h-1zM374 683h1v1h-1zM393 683h1v1h-1zM411 683h1v1h-1zM430 683h1v1h-1zM448 683h1v1h-1zM467 683h1v1h-1zM486 683h1v1h-1zM504 683h1v1h-1zM523 683h1v1h-1zM541 683h1v1h-1zM560 683h1v1h-1zM579 683h1v1h-1zM597 683h1v1h-1zM616 683h1v1h-1zM634 683h1v1h-1zM653 683h1v1h-1zM672 683h1v1h-1zM690 683h1v1h-1zM709 683h1v1h-1zM727 683h1v1h-1zM746 683h1v1h-1zM765 683h1v1h-1zM783 683h1v1h-1zM802 683h1v1h-1zM820 683h1v1h-1zM839 683h1v1h-1zM858 683h1v1h-1zM876 683h1v1h-1zM895 683h1v1h-1zM913 683h1v1h-1zM931 683h1v1h-1zM950 683h1v1h-1zM968 683h1v1h-1zM987 683h1v1h-1zM1005 683h1v1h-1zM1024 683h1v1h-1zM1043 683h1v1h-1zM1061 683h1v1h-1zM1080 683h1v1h-1zM1098 683h1v1h-1zM1117 683h1v1h-1zM1136 683h1v1h-1zM1154 683h1v1h-1zM1173 683h1v1h-1zM1191 683h1v1h-1zM1210 683h1v1h-1zM1229 683h1v1h-1zM1247 683h1v1h-1zM1266 683h1v1h-1zM1284 683h1v1h-1zM1303 683h1v1h-1zM1322 683h1v1h-1zM1340 683h1v1h-1zM1359 683h1v1h-1zM1377 683h1v1h-1zM1396 683h1v1h-1zM1415 683h1v1h-1zM1433 683h1v1h-1zM1452 683h1v1h-1zM1470 683h1v1h-1zM1489 683h1v1h-1zM1508 683h1v1h-1zM1526 683h1v1h-1zM1545 683h1v1h-1zM1563 683h1v1h-1zM1582 683h1v1h-1zM1601 683h1v1h-1zM1619 683h1v1h-1zM1638 683h1v1h-1zM1656 683h1v1h-1zM169 702h1v1h-1zM188 702h1v1h-1zM207 702h1v1h-1zM225 702h1v1h-1zM244 702h1v1h-1zM262 702h1v1h-1zM281 702h1v1h-1zM300 702h1v1h-1zM318 702h1v1h-1zM337 702h1v1h-1zM355 702h1v1h-1zM374 702h1v1h-1zM393 702h1v1h-1zM411 702h1v1h-1zM430 702h1v1h-1zM448 702h1v1h-1zM467 702h1v1h-1zM486 702h1v1h-1zM504 702h1v1h-1zM523 702h1v1h-1zM541 702h1v1h-1zM560 702h1v1h-1zM579 702h1v1h-1zM597 702h1v1h-1zM616 702h1v1h-1zM634 702h1v1h-1zM653 702h1v1h-1zM672 702h1v1h-1zM690 702h1v1h-1zM709 702h1v1h-1zM727 702h1v1h-1zM746 702h1v1h-1zM765 702h1v1h-1zM783 702h1v1h-1zM802 702h1v1h-1zM820 702h1v1h-1zM839 702h1v1h-1zM858 702h1v1h-1zM876 702h1v1h-1zM895 702h1v1h-1zM913 702h1v1h-1zM931 702h1v1h-1zM950 702h1v1h-1zM968 702h1v1h-1zM987 702h1v1h-1zM1005 702h1v1h-1zM1024 702h1v1h-1zM1043 702h1v1h-1zM1061 702h1v1h-1zM1080 702h1v1h-1zM1098 702h1v1h-1zM1117 702h1v1h-1zM1136 702h1v1h-1zM1154 702h1v1h-1zM1173 702h1v1h-1zM1191 702h1v1h-1zM1210 702h1v1h-1zM1229 702h1v1h-1zM1247 702h1v1h-1zM1266 702h1v1h-1zM1284 702h1v1h-1zM1303 702h1v1h-1zM1322 702h1v1h-1zM1340 702h1v1h-1zM1359 702h1v1h-1zM1377 702h1v1h-1zM1396 702h1v1h-1zM1415 702h1v1h-1zM1433 702h1v1h-1zM1452 702h1v1h-1zM1470 702h1v1h-1zM1489 702h1v1h-1zM1508 702h1v1h-1zM1526 702h1v1h-1zM1545 702h1v1h-1zM1563 702h1v1h-1zM1582 702h1v1h-1zM1601 702h1v1h-1zM1619 702h1v1h-1zM1638 702h1v1h-1zM1656 702h1v1h-1zM169 721h1v1h-1zM188 721h1v1h-1zM207 721h1v1h-1zM225 721h1v1h-1zM244 721h1v1h-1zM262 721h1v1h-1zM281 721h1v1h-1zM300 721h1v1h-1zM318 721h1v1h-1zM337 721h1v1h-1zM355 721h1v1h-1zM374 721h1v1h-1zM393 721h1v1h-1zM411 721h1v1h-1zM430 721h1v1h-1zM448 721h1v1h-1zM467 721h1v1h-1zM486 721h1v1h-1zM504 721h1v1h-1zM523 721h1v1h-1zM541 721h1v1h-1zM560 721h1v1h-1zM579 721h1v1h-1zM597 721h1v1h-1zM616 721h1v1h-1zM634 721h1v1h-1zM653 721h1v1h-1zM672 721h1v1h-1zM690 721h1v1h-1zM709 721h1v1h-1zM727 721h1v1h-1zM746 721h1v1h-1zM765 721h1v1h-1zM783 721h1v1h-1zM802 721h1v1h-1zM820 721h1v1h-1zM839 721h1v1h-1zM858 721h1v1h-1zM876 721h1v1h-1zM895 721h1v1h-1zM913 721h1v1h-1zM931 721h1v1h-1zM950 721h1v1h-1zM968 721h1v1h-1zM987 721h1v1h-1zM1005 721h1v1h-1zM1024 721h1v1h-1zM1043 721h1v1h-1zM1061 721h1v1h-1zM1080 721h1v1h-1zM1098 721h1v1h-1zM1117 721h1v1h-1zM1136 721h1v1h-1zM1154 721h1v1h-1zM1173 721h1v1h-1zM1191 721h1v1h-1zM1210 721h1v1h-1zM1229 721h1v1h-1zM1247 721h1v1h-1zM1266 721h1v1h-1zM1284 721h1v1h-1zM1303 721h1v1h-1zM1322 721h1v1h-1zM1340 721h1v1h-1zM1359 721h1v1h-1zM1377 721h1v1h-1zM1396 721h1v1h-1zM1415 721h1v1h-1zM1433 721h1v1h-1zM1452 721h1v1h-1zM1470 721h1v1h-1zM1489 721h1v1h-1zM1508 721h1v1h-1zM1526 721h1v1h-1zM1545 721h1v1h-1zM1563 721h1v1h-1zM1582 721h1v1h-1zM1601 721h1v1h-1zM1619 721h1v1h-1zM1638 721h1v1h-1zM1656 721h1v1h-1zM169 739h1v1h-1zM188 739h1v1h-1zM207 739h1v1h-1zM225 739h1v1h-1zM244 739h1v1h-1zM262 739h1v1h-1zM281 739h1v1h-1zM300 739h1v1h-1zM318 739h1v1h-1zM337 739h1v1h-1zM355 739h1v1h-1zM374 739h1v1h-1zM393 739h1v1h-1zM411 739h1v1h-1zM430 739h1v1h-1zM448 739h1v1h-1zM467 739h1v1h-1zM486 739h1v1h-1zM504 739h1v1h-1zM523 739h1v1h-1zM541 739h1v1h-1zM560 739h1v1h-1zM579 739h1v1h-1zM597 739h1v1h-1zM616 739h1v1h-1zM634 739h1v1h-1zM653 739h1v1h-1zM672 739h1v1h-1zM690 739h1v1h-1zM709 739h1v1h-1zM727 739h1v1h-1zM746 739h1v1h-1zM765 739h1v1h-1zM783 739h1v1h-1zM802 739h1v1h-1zM820 739h1v1h-1zM839 739h1v1h-1zM858 739h1v1h-1zM876 739h1v1h-1zM895 739h1v1h-1zM913 739h1v1h-1zM931 739h1v1h-1zM950 739h1v1h-1zM968 739h1v1h-1zM987 739h1v1h-1zM1005 739h1v1h-1zM1024 739h1v1h-1zM1043 739h1v1h-1zM1061 739h1v1h-1zM1080 739h1v1h-1zM1098 739h1v1h-1zM1117 739h1v1h-1zM1136 739h1v1h-1zM1154 739h1v1h-1zM1173 739h1v1h-1zM1191 739h1v1h-1zM1210 739h1v1h-1zM1229 739h1v1h-1zM1247 739h1v1h-1zM1266 739h1v1h-1zM1284 739h1v1h-1zM1303 739h1v1h-1zM1322 739h1v1h-1zM1340 739h1v1h-1zM1359 739h1v1h-1zM1377 739h1v1h-1zM1396 739h1v1h-1zM1415 739h1v1h-1zM1433 739h1v1h-1zM1452 739h1v1h-1zM1470 739h1v1h-1zM1489 739h1v1h-1zM1508 739h1v1h-1zM1526 739h1v1h-1zM1545 739h1v1h-1zM1563 739h1v1h-1zM1582 739h1v1h-1zM1601 739h1v1h-1zM1619 739h1v1h-1zM1638 739h1v1h-1zM1656 739h1v1h-1zM169 758h1v1h-1zM188 758h1v1h-1zM207 758h1v1h-1zM225 758h1v1h-1zM244 758h1v1h-1zM262 758h1v1h-1zM281 758h1v1h-1zM300 758h1v1h-1zM318 758h1v1h-1zM337 758h1v1h-1zM355 758h1v1h-1zM374 758h1v1h-1zM393 758h1v1h-1zM411 758h1v1h-1zM430 758h1v1h-1zM448 758h1v1h-1zM467 758h1v1h-1zM486 758h1v1h-1zM504 758h1v1h-1zM523 758h1v1h-1zM541 758h1v1h-1zM560 758h1v1h-1zM579 758h1v1h-1zM597 758h1v1h-1zM616 758h1v1h-1zM634 758h1v1h-1zM653 758h1v1h-1zM672 758h1v1h-1zM690 758h1v1h-1zM709 758h1v1h-1zM727 758h1v1h-1zM746 758h1v1h-1zM765 758h1v1h-1zM783 758h1v1h-1zM802 758h1v1h-1zM820 758h1v1h-1zM839 758h1v1h-1zM858 758h1v1h-1zM876 758h1v1h-1zM895 758h1v1h-1zM913 758h1v1h-1zM931 758h1v1h-1zM950 758h1v1h-1zM968 758h1v1h-1zM987 758h1v1h-1zM1005 758h1v1h-1zM1024 758h1v1h-1zM1043 758h1v1h-1zM1061 758h1v1h-1zM1080 758h1v1h-1zM1098 758h1v1h-1zM1117 758h1v1h-1zM1136 758h1v1h-1zM1154 758h1v1h-1zM1173 758h1v1h-1zM1191 758h1v1h-1zM1210 758h1v1h-1zM1229 758h1v1h-1zM1247 758h1v1h-1zM1266 758h1v1h-1zM1284 758h1v1h-1zM1303 758h1v1h-1zM1322 758h1v1h-1zM1340 758h1v1h-1zM1359 758h1v1h-1zM1377 758h1v1h-1zM1396 758h1v1h-1zM1415 758h1v1h-1zM1433 758h1v1h-1zM1452 758h1v1h-1zM1470 758h1v1h-1zM1489 758h1v1h-1zM1508 758h1v1h-1zM1526 758h1v1h-1zM1545 758h1v1h-1zM1563 758h1v1h-1zM1582 758h1v1h-1zM1601 758h1v1h-1zM1619 758h1v1h-1zM1638 758h1v1h-1zM1656 758h1v1h-1zM169 776h1v1h-1zM188 776h1v1h-1zM207 776h1v1h-1zM225 776h1v1h-1zM244 776h1v1h-1zM262 776h1v1h-1zM281 776h1v1h-1zM300 776h1v1h-1zM318 776h1v1h-1zM337 776h1v1h-1zM355 776h1v1h-1zM374 776h1v1h-1zM393 776h1v1h-1zM411 776h1v1h-1zM430 776h1v1h-1zM448 776h1v1h-1zM467 776h1v1h-1zM486 776h1v1h-1zM504 776h1v1h-1zM523 776h1v1h-1zM541 776h1v1h-1zM560 776h1v1h-1zM579 776h1v1h-1zM597 776h1v1h-1zM616 776h1v1h-1zM634 776h1v1h-1zM653 776h1v1h-1zM672 776h1v1h-1zM690 776h1v1h-1zM709 776h1v1h-1zM727 776h1v1h-1zM746 776h1v1h-1zM765 776h1v1h-1zM783 776h1v1h-1zM802 776h1v1h-1zM820 776h1v1h-1zM839 776h1v1h-1zM858 776h1v1h-1zM876 776h1v1h-1zM895 776h1v1h-1zM913 776h1v1h-1zM931 776h1v1h-1zM950 776h1v1h-1zM968 776h1v1h-1zM987 776h1v1h-1zM1005 776h1v1h-1zM1024 776h1v1h-1zM1043 776h1v1h-1zM1061 776h1v1h-1zM1080 776h1v1h-1zM1098 776h1v1h-1zM1117 776h1v1h-1zM1136 776h1v1h-1zM1154 776h1v1h-1zM1173 776h1v1h-1zM1191 776h1v1h-1zM1210 776h1v1h-1zM1229 776h1v1h-1zM1247 776h1v1h-1zM1266 776h1v1h-1zM1284 776h1v1h-1zM1303 776h1v1h-1zM1322 776h1v1h-1zM1340 776h1v1h-1zM1359 776h1v1h-1zM1377 776h1v1h-1zM1396 776h1v1h-1zM1415 776h1v1h-1zM1433 776h1v1h-1zM1452 776h1v1h-1zM1470 776h1v1h-1zM1489 776h1v1h-1zM1508 776h1v1h-1zM1526 776h1v1h-1zM1545 776h1v1h-1zM1563 776h1v1h-1zM1582 776h1v1h-1zM1601 776h1v1h-1zM1619 776h1v1h-1zM1638 776h1v1h-1zM1656 776h1v1h-1zM169 795h1v1h-1zM188 795h1v1h-1zM207 795h1v1h-1zM225 795h1v1h-1zM244 795h1v1h-1zM262 795h1v1h-1zM281 795h1v1h-1zM300 795h1v1h-1zM318 795h1v1h-1zM337 795h1v1h-1zM355 795h1v1h-1zM374 795h1v1h-1zM393 795h1v1h-1zM411 795h1v1h-1zM430 795h1v1h-1zM448 795h1v1h-1zM467 795h1v1h-1zM486 795h1v1h-1zM504 795h1v1h-1zM523 795h1v1h-1zM541 795h1v1h-1zM560 795h1v1h-1zM579 795h1v1h-1zM597 795h1v1h-1zM616 795h1v1h-1zM634 795h1v1h-1zM653 795h1v1h-1zM672 795h1v1h-1zM690 795h1v1h-1zM709 795h1v1h-1zM727 795h1v1h-1zM746 795h1v1h-1zM765 795h1v1h-1zM783 795h1v1h-1zM802 795h1v1h-1zM820 795h1v1h-1zM839 795h1v1h-1zM858 795h1v1h-1zM876 795h1v1h-1zM895 795h1v1h-1zM913 795h1v1h-1zM931 795h1v1h-1zM950 795h1v1h-1zM968 795h1v1h-1zM987 795h1v1h-1zM1005 795h1v1h-1zM1024 795h1v1h-1zM1043 795h1v1h-1zM1061 795h1v1h-1zM1080 795h1v1h-1zM1098 795h1v1h-1zM1117 795h1v1h-1zM1136 795h1v1h-1zM1154 795h1v1h-1zM1173 795h1v1h-1zM1191 795h1v1h-1zM1210 795h1v1h-1zM1229 795h1v1h-1zM1247 795h1v1h-1zM1266 795h1v1h-1zM1284 795h1v1h-1zM1303 795h1v1h-1zM1322 795h1v1h-1zM1340 795h1v1h-1zM1359 795h1v1h-1zM1377 795h1v1h-1zM1396 795h1v1h-1zM1415 795h1v1h-1zM1433 795h1v1h-1zM1452 795h1v1h-1zM1470 795h1v1h-1zM1489 795h1v1h-1zM1508 795h1v1h-1zM1526 795h1v1h-1zM1545 795h1v1h-1zM1563 795h1v1h-1zM1582 795h1v1h-1zM1601 795h1v1h-1zM1619 795h1v1h-1zM1638 795h1v1h-1zM1656 795h1v1h-1zM169 814h1v1h-1zM188 814h1v1h-1zM207 814h1v1h-1zM225 814h1v1h-1zM244 814h1v1h-1zM262 814h1v1h-1zM281 814h1v1h-1zM300 814h1v1h-1zM318 814h1v1h-1zM337 814h1v1h-1zM355 814h1v1h-1zM374 814h1v1h-1zM393 814h1v1h-1zM411 814h1v1h-1zM430 814h1v1h-1zM448 814h1v1h-1zM467 814h1v1h-1zM486 814h1v1h-1zM504 814h1v1h-1zM523 814h1v1h-1zM541 814h1v1h-1zM560 814h1v1h-1zM579 814h1v1h-1zM597 814h1v1h-1zM616 814h1v1h-1zM634 814h1v1h-1zM653 814h1v1h-1zM672 814h1v1h-1zM690 814h1v1h-1zM709 814h1v1h-1zM727 814h1v1h-1zM746 814h1v1h-1zM765 814h1v1h-1zM783 814h1v1h-1zM802 814h1v1h-1zM820 814h1v1h-1zM839 814h1v1h-1zM858 814h1v1h-1zM876 814h1v1h-1zM895 814h1v1h-1zM913 814h1v1h-1zM931 814h1v1h-1zM950 814h1v1h-1zM968 814h1v1h-1zM987 814h1v1h-1zM1005 814h1v1h-1zM1024 814h1v1h-1zM1043 814h1v1h-1zM1061 814h1v1h-1zM1080 814h1v1h-1zM1098 814h1v1h-1zM1117 814h1v1h-1zM1136 814h1v1h-1zM1154 814h1v1h-1zM1173 814h1v1h-1zM1191 814h1v1h-1zM1210 814h1v1h-1zM1229 814h1v1h-1zM1247 814h1v1h-1zM1266 814h1v1h-1zM1284 814h1v1h-1zM1303 814h1v1h-1zM1322 814h1v1h-1zM1340 814h1v1h-1zM1359 814h1v1h-1zM1377 814h1v1h-1zM1396 814h1v1h-1zM1415 814h1v1h-1zM1433 814h1v1h-1zM1452 814h1v1h-1zM1470 814h1v1h-1zM1489 814h1v1h-1zM1508 814h1v1h-1zM1526 814h1v1h-1zM1545 814h1v1h-1zM1563 814h1v1h-1zM1582 814h1v1h-1zM1601 814h1v1h-1zM1619 814h1v1h-1zM1638 814h1v1h-1zM1656 814h1v1h-1zM169 832h1v1h-1zM188 832h1v1h-1zM207 832h1v1h-1zM225 832h1v1h-1zM244 832h1v1h-1zM262 832h1v1h-1zM281 832h1v1h-1zM300 832h1v1h-1zM318 832h1v1h-1zM337 832h1v1h-1zM355 832h1v1h-1zM374 832h1v1h-1zM393 832h1v1h-1zM411 832h1v1h-1zM430 832h1v1h-1zM448 832h1v1h-1zM467 832h1v1h-1zM486 832h1v1h-1zM504 832h1v1h-1zM523 832h1v1h-1zM541 832h1v1h-1zM560 832h1v1h-1zM579 832h1v1h-1zM597 832h1v1h-1zM616 832h1v1h-1zM634 832h1v1h-1zM653 832h1v1h-1zM672 832h1v1h-1zM690 832h1v1h-1zM709 832h1v1h-1zM727 832h1v1h-1zM746 832h1v1h-1zM765 832h1v1h-1zM783 832h1v1h-1zM802 832h1v1h-1zM820 832h1v1h-1zM839 832h1v1h-1zM858 832h1v1h-1zM876 832h1v1h-1zM895 832h1v1h-1zM913 832h1v1h-1zM931 832h1v1h-1zM950 832h1v1h-1zM968 832h1v1h-1zM987 832h1v1h-1zM1005 832h1v1h-1zM1024 832h1v1h-1zM1043 832h1v1h-1zM1061 832h1v1h-1zM1080 832h1v1h-1zM1098 832h1v1h-1zM1117 832h1v1h-1zM1136 832h1v1h-1zM1154 832h1v1h-1zM1173 832h1v1h-1zM1191 832h1v1h-1zM1210 832h1v1h-1zM1229 832h1v1h-1zM1247 832h1v1h-1zM1266 832h1v1h-1zM1284 832h1v1h-1zM1303 832h1v1h-1zM1322 832h1v1h-1zM1340 832h1v1h-1zM1359 832h1v1h-1zM1377 832h1v1h-1zM1396 832h1v1h-1zM1415 832h1v1h-1zM1433 832h1v1h-1zM1452 832h1v1h-1zM1470 832h1v1h-1zM1489 832h1v1h-1zM1508 832h1v1h-1zM1526 832h1v1h-1zM1545 832h1v1h-1zM1563 832h1v1h-1zM1582 832h1v1h-1zM1601 832h1v1h-1zM1619 832h1v1h-1zM1638 832h1v1h-1zM1656 832h1v1h-1zM169 851h1v1h-1zM188 851h1v1h-1zM207 851h1v1h-1zM225 851h1v1h-1zM244 851h1v1h-1zM262 851h1v1h-1zM281 851h1v1h-1zM300 851h1v1h-1zM318 851h1v1h-1zM337 851h1v1h-1zM355 851h1v1h-1zM374 851h1v1h-1zM393 851h1v1h-1zM411 851h1v1h-1zM430 851h1v1h-1zM448 851h1v1h-1zM467 851h1v1h-1zM486 851h1v1h-1zM504 851h1v1h-1zM523 851h1v1h-1zM541 851h1v1h-1zM560 851h1v1h-1zM579 851h1v1h-1zM597 851h1v1h-1zM616 851h1v1h-1zM634 851h1v1h-1zM653 851h1v1h-1zM672 851h1v1h-1zM690 851h1v1h-1zM709 851h1v1h-1zM727 851h1v1h-1zM746 851h1v1h-1zM765 851h1v1h-1zM783 851h1v1h-1zM802 851h1v1h-1zM820 851h1v1h-1zM839 851h1v1h-1zM858 851h1v1h-1zM876 851h1v1h-1zM895 851h1v1h-1zM913 851h1v1h-1zM931 851h1v1h-1zM950 851h1v1h-1zM968 851h1v1h-1zM987 851h1v1h-1zM1005 851h1v1h-1zM1024 851h1v1h-1zM1043 851h1v1h-1zM1061 851h1v1h-1zM1080 851h1v1h-1zM1098 851h1v1h-1zM1117 851h1v1h-1zM1136 851h1v1h-1zM1154 851h1v1h-1zM1173 851h1v1h-1zM1191 851h1v1h-1zM1210 851h1v1h-1zM1229 851h1v1h-1zM1247 851h1v1h-1zM1266 851h1v1h-1zM1284 851h1v1h-1zM1303 851h1v1h-1zM1322 851h1v1h-1zM1340 851h1v1h-1zM1359 851h1v1h-1zM1377 851h1v1h-1zM1396 851h1v1h-1zM1415 851h1v1h-1zM1433 851h1v1h-1zM1452 851h1v1h-1zM1470 851h1v1h-1zM1489 851h1v1h-1zM1508 851h1v1h-1zM1526 851h1v1h-1zM1545 851h1v1h-1zM1563 851h1v1h-1zM1582 851h1v1h-1zM1601 851h1v1h-1zM1619 851h1v1h-1zM1638 851h1v1h-1zM1656 851h1v1h-1zM169 869h1v1h-1zM188 869h1v1h-1zM207 869h1v1h-1zM225 869h1v1h-1zM244 869h1v1h-1zM262 869h1v1h-1zM281 869h1v1h-1zM300 869h1v1h-1zM318 869h1v1h-1zM337 869h1v1h-1zM355 869h1v1h-1zM374 869h1v1h-1zM393 869h1v1h-1zM411 869h1v1h-1zM430 869h1v1h-1zM448 869h1v1h-1zM467 869h1v1h-1zM486 869h1v1h-1zM504 869h1v1h-1zM523 869h1v1h-1zM541 869h1v1h-1zM560 869h1v1h-1zM579 869h1v1h-1zM597 869h1v1h-1zM616 869h1v1h-1zM634 869h1v1h-1zM653 869h1v1h-1zM672 869h1v1h-1zM690 869h1v1h-1zM709 869h1v1h-1zM727 869h1v1h-1zM746 869h1v1h-1zM765 869h1v1h-1zM783 869h1v1h-1zM802 869h1v1h-1zM820 869h1v1h-1zM839 869h1v1h-1zM858 869h1v1h-1zM876 869h1v1h-1zM895 869h1v1h-1zM913 869h1v1h-1zM931 869h1v1h-1zM950 869h1v1h-1zM968 869h1v1h-1zM987 869h1v1h-1zM1005 869h1v1h-1zM1024 869h1v1h-1zM1043 869h1v1h-1zM1061 869h1v1h-1zM1080 869h1v1h-1zM1098 869h1v1h-1zM1117 869h1v1h-1zM1136 869h1v1h-1zM1154 869h1v1h-1zM1173 869h1v1h-1zM1191 869h1v1h-1zM1210 869h1v1h-1zM1229 869h1v1h-1zM1247 869h1v1h-1zM1266 869h1v1h-1zM1284 869h1v1h-1zM1303 869h1v1h-1zM1322 869h1v1h-1zM1340 869h1v1h-1zM1359 869h1v1h-1zM1377 869h1v1h-1zM1396 869h1v1h-1zM1415 869h1v1h-1zM1433 869h1v1h-1zM1452 869h1v1h-1zM1470 869h1v1h-1zM1489 869h1v1h-1zM1508 869h1v1h-1zM1526 869h1v1h-1zM1545 869h1v1h-1zM1563 869h1v1h-1zM1582 869h1v1h-1zM1601 869h1v1h-1zM1619 869h1v1h-1zM1638 869h1v1h-1zM1656 869h1v1h-1zM169 888h1v1h-1zM188 888h1v1h-1zM207 888h1v1h-1zM225 888h1v1h-1zM244 888h1v1h-1zM262 888h1v1h-1zM281 888h1v1h-1zM300 888h1v1h-1zM318 888h1v1h-1zM337 888h1v1h-1zM355 888h1v1h-1zM374 888h1v1h-1zM393 888h1v1h-1zM411 888h1v1h-1zM430 888h1v1h-1zM448 888h1v1h-1zM467 888h1v1h-1zM486 888h1v1h-1zM504 888h1v1h-1zM523 888h1v1h-1zM541 888h1v1h-1zM560 888h1v1h-1zM579 888h1v1h-1zM597 888h1v1h-1zM616 888h1v1h-1zM634 888h1v1h-1zM653 888h1v1h-1zM672 888h1v1h-1zM690 888h1v1h-1zM709 888h1v1h-1zM727 888h1v1h-1zM746 888h1v1h-1zM765 888h1v1h-1zM783 888h1v1h-1zM802 888h1v1h-1zM820 888h1v1h-1zM839 888h1v1h-1zM858 888h1v1h-1zM876 888h1v1h-1zM895 888h1v1h-1zM913 888h1v1h-1zM931 888h1v1h-1zM950 888h1v1h-1zM968 888h1v1h-1zM987 888h1v1h-1zM1005 888h1v1h-1zM1024 888h1v1h-1zM1043 888h1v1h-1zM1061 888h1v1h-1zM1080 888h1v1h-1zM1098 888h1v1h-1zM1117 888h1v1h-1zM1136 888h1v1h-1zM1154 888h1v1h-1zM1173 888h1v1h-1zM1191 888h1v1h-1zM1210 888h1v1h-1zM1229 888h1v1h-1zM1247 888h1v1h-1zM1266 888h1v1h-1zM1284 888h1v1h-1zM1303 888h1v1h-1zM1322 888h1v1h-1zM1340 888h1v1h-1zM1359 888h1v1h-1zM1377 888h1v1h-1zM1396 888h1v1h-1zM1415 888h1v1h-1zM1433 888h1v1h-1zM1452 888h1v1h-1zM1470 888h1v1h-1zM1489 888h1v1h-1zM1508 888h1v1h-1zM1526 888h1v1h-1zM1545 888h1v1h-1zM1563 888h1v1h-1zM1582 888h1v1h-1zM1601 888h1v1h-1zM1619 888h1v1h-1zM1638 888h1v1h-1zM1656 888h1v1h-1zM169 907h1v1h-1zM188 907h1v1h-1zM207 907h1v1h-1zM225 907h1v1h-1zM244 907h1v1h-1zM262 907h1v1h-1zM281 907h1v1h-1zM300 907h1v1h-1zM318 907h1v1h-1zM337 907h1v1h-1zM355 907h1v1h-1zM374 907h1v1h-1zM393 907h1v1h-1zM411 907h1v1h-1zM430 907h1v1h-1zM448 907h1v1h-1zM467 907h1v1h-1zM486 907h1v1h-1zM504 907h1v1h-1zM523 907h1v1h-1zM541 907h1v1h-1zM560 907h1v1h-1zM579 907h1v1h-1zM597 907h1v1h-1zM616 907h1v1h-1zM634 907h1v1h-1zM653 907h1v1h-1zM672 907h1v1h-1zM690 907h1v1h-1zM709 907h1v1h-1zM727 907h1v1h-1zM746 907h1v1h-1zM765 907h1v1h-1zM783 907h1v1h-1zM802 907h1v1h-1zM820 907h1v1h-1zM839 907h1v1h-1zM858 907h1v1h-1zM876 907h1v1h-1zM895 907h1v1h-1zM913 907h1v1h-1zM931 907h1v1h-1zM950 907h1v1h-1zM968 907h1v1h-1zM987 907h1v1h-1zM1005 907h1v1h-1zM1024 907h1v1h-1zM1043 907h1v1h-1zM1061 907h1v1h-1zM1080 907h1v1h-1zM1098 907h1v1h-1zM1117 907h1v1h-1zM1136 907h1v1h-1zM1154 907h1v1h-1zM1173 907h1v1h-1zM1191 907h1v1h-1zM1210 907h1v1h-1zM1229 907h1v1h-1zM1247 907h1v1h-1zM1266 907h1v1h-1zM1284 907h1v1h-1zM1303 907h1v1h-1zM1322 907h1v1h-1zM1340 907h1v1h-1zM1359 907h1v1h-1zM1377 907h1v1h-1zM1396 907h1v1h-1zM1415 907h1v1h-1zM1433 907h1v1h-1zM1452 907h1v1h-1zM1470 907h1v1h-1zM1489 907h1v1h-1zM1508 907h1v1h-1zM1526 907h1v1h-1zM1545 907h1v1h-1zM1563 907h1v1h-1zM1582 907h1v1h-1zM1601 907h1v1h-1zM1619 907h1v1h-1zM1638 907h1v1h-1zM1656 907h1v1h-1zM169 925h1v1h-1zM188 925h1v1h-1zM207 925h1v1h-1zM225 925h1v1h-1zM244 925h1v1h-1zM262 925h1v1h-1zM281 925h1v1h-1zM300 925h1v1h-1zM318 925h1v1h-1zM337 925h1v1h-1zM355 925h1v1h-1zM374 925h1v1h-1zM393 925h1v1h-1zM411 925h1v1h-1zM430 925h1v1h-1zM448 925h1v1h-1zM467 925h1v1h-1zM486 925h1v1h-1zM504 925h1v1h-1zM523 925h1v1h-1zM541 925h1v1h-1zM560 925h1v1h-1zM579 925h1v1h-1zM597 925h1v1h-1zM616 925h1v1h-1zM634 925h1v1h-1zM653 925h1v1h-1zM672 925h1v1h-1zM690 925h1v1h-1zM709 925h1v1h-1zM727 925h1v1h-1zM746 925h1v1h-1zM765 925h1v1h-1zM783 925h1v1h-1zM802 925h1v1h-1zM820 925h1v1h-1zM839 925h1v1h-1zM858 925h1v1h-1zM876 925h1v1h-1zM895 925h1v1h-1zM913 925h1v1h-1zM931 925h1v1h-1zM950 925h1v1h-1zM968 925h1v1h-1zM987 925h1v1h-1zM1005 925h1v1h-1zM1024 925h1v1h-1zM1043 925h1v1h-1zM1061 925h1v1h-1zM1080 925h1v1h-1zM1098 925h1v1h-1zM1117 925h1v1h-1zM1136 925h1v1h-1zM1154 925h1v1h-1zM1173 925h1v1h-1zM1191 925h1v1h-1zM1210 925h1v1h-1zM1229 925h1v1h-1zM1247 925h1v1h-1zM1266 925h1v1h-1zM1284 925h1v1h-1zM1303 925h1v1h-1zM1322 925h1v1h-1zM1340 925h1v1h-1zM1359 925h1v1h-1zM1377 925h1v1h-1zM1396 925h1v1h-1zM1415 925h1v1h-1zM1433 925h1v1h-1zM1452 925h1v1h-1zM1470 925h1v1h-1zM1489 925h1v1h-1zM1508 925h1v1h-1zM1526 925h1v1h-1zM1545 925h1v1h-1zM1563 925h1v1h-1zM1582 925h1v1h-1zM1601 925h1v1h-1zM1619 925h1v1h-1zM1638 925h1v1h-1zM1656 925h1v1h-1zM169 944h1v1h-1zM188 944h1v1h-1zM207 944h1v1h-1zM225 944h1v1h-1zM244 944h1v1h-1zM262 944h1v1h-1zM281 944h1v1h-1zM300 944h1v1h-1zM318 944h1v1h-1zM337 944h1v1h-1zM355 944h1v1h-1zM374 944h1v1h-1zM393 944h1v1h-1zM411 944h1v1h-1zM430 944h1v1h-1zM448 944h1v1h-1zM467 944h1v1h-1zM486 944h1v1h-1zM504 944h1v1h-1zM523 944h1v1h-1zM541 944h1v1h-1zM560 944h1v1h-1zM579 944h1v1h-1zM597 944h1v1h-1zM616 944h1v1h-1zM634 944h1v1h-1zM653 944h1v1h-1zM672 944h1v1h-1zM690 944h1v1h-1zM709 944h1v1h-1zM727 944h1v1h-1zM746 944h1v1h-1zM765 944h1v1h-1zM783 944h1v1h-1zM802 944h1v1h-1zM820 944h1v1h-1zM839 944h1v1h-1zM858 944h1v1h-1zM876 944h1v1h-1zM895 944h1v1h-1zM913 944h1v1h-1zM931 944h1v1h-1zM950 944h1v1h-1zM968 944h1v1h-1zM987 944h1v1h-1zM1005 944h1v1h-1zM1024 944h1v1h-1zM1043 944h1v1h-1zM1061 944h1v1h-1zM1080 944h1v1h-1zM1098 944h1v1h-1zM1117 944h1v1h-1zM1136 944h1v1h-1zM1154 944h1v1h-1zM1173 944h1v1h-1zM1191 944h1v1h-1zM1210 944h1v1h-1zM1229 944h1v1h-1zM1247 944h1v1h-1zM1266 944h1v1h-1zM1284 944h1v1h-1zM1303 944h1v1h-1zM1322 944h1v1h-1zM1340 944h1v1h-1zM1359 944h1v1h-1zM1377 944h1v1h-1zM1396 944h1v1h-1zM1415 944h1v1h-1zM1433 944h1v1h-1zM1452 944h1v1h-1zM1470 944h1v1h-1zM1489 944h1v1h-1zM1508 944h1v1h-1zM1526 944h1v1h-1zM1545 944h1v1h-1zM1563 944h1v1h-1zM1582 944h1v1h-1zM1601 944h1v1h-1zM1619 944h1v1h-1zM1638 944h1v1h-1zM1656 944h1v1h-1zM169 962h1v1h-1zM188 962h1v1h-1zM207 962h1v1h-1zM225 962h1v1h-1zM244 962h1v1h-1zM262 962h1v1h-1zM281 962h1v1h-1zM300 962h1v1h-1zM318 962h1v1h-1zM337 962h1v1h-1zM355 962h1v1h-1zM374 962h1v1h-1zM393 962h1v1h-1zM411 962h1v1h-1zM430 962h1v1h-1zM448 962h1v1h-1zM467 962h1v1h-1zM486 962h1v1h-1zM504 962h1v1h-1zM523 962h1v1h-1zM541 962h1v1h-1zM560 962h1v1h-1zM579 962h1v1h-1zM597 962h1v1h-1zM616 962h1v1h-1zM634 962h1v1h-1zM653 962h1v1h-1zM672 962h1v1h-1zM690 962h1v1h-1zM709 962h1v1h-1zM727 962h1v1h-1zM746 962h1v1h-1zM765 962h1v1h-1zM783 962h1v1h-1zM802 962h1v1h-1zM820 962h1v1h-1zM839 962h1v1h-1zM858 962h1v1h-1zM876 962h1v1h-1zM895 962h1v1h-1zM913 962h1v1h-1zM931 962h1v1h-1zM950 962h1v1h-1zM968 962h1v1h-1zM987 962h1v1h-1zM1005 962h1v1h-1zM1024 962h1v1h-1zM1043 962h1v1h-1zM1061 962h1v1h-1zM1080 962h1v1h-1zM1098 962h1v1h-1zM1117 962h1v1h-1zM1136 962h1v1h-1zM1154 962h1v1h-1zM1173 962h1v1h-1zM1191 962h1v1h-1zM1210 962h1v1h-1zM1229 962h1v1h-1zM1247 962h1v1h-1zM1266 962h1v1h-1zM1284 962h1v1h-1zM1303 962h1v1h-1zM1322 962h1v1h-1zM1340 962h1v1h-1zM1359 962h1v1h-1zM1377 962h1v1h-1zM1396 962h1v1h-1zM1415 962h1v1h-1zM1433 962h1v1h-1zM1452 962h1v1h-1zM1470 962h1v1h-1zM1489 962h1v1h-1zM1508 962h1v1h-1zM1526 962h1v1h-1zM1545 962h1v1h-1zM1563 962h1v1h-1zM1582 962h1v1h-1zM1601 962h1v1h-1zM1619 962h1v1h-1zM1638 962h1v1h-1zM1656 962h1v1h-1z"/>
<rect x="1563" y="70" width="1" height="899" fill="#0000ff" shape-rendering="crispEdges"/>
<g shape-rendering="crispEdges">
<rect x="299" y="237" width="243" height="429" fill="#800000"/>
<rect x="301" y="239" width="239" height="425" fill="#c8c6ab"/>
<rect x="262" y="256" width="37" height="2" fill="#800000"/>
<rect x="262" y="293" width="37" height="2" fill="#800000"/>
<rect x="262" y="311" width="37" height="2" fill="#800000"/>
<rect x="262" y="349" width="37" height="2" fill="#800000"/>
<rect x="262" y="367" width="37" height="2" fill="#800000"/>
<rect x="262" y="386" width="37" height="2" fill="#800000"/>
<rect x="262" y="404" width="37" height="2" fill="#800000"/>
<rect x="262" y="423" width="37" height="2" fill="#800000"/>
<rect x="262" y="442" width="37" height="2" fill="#800000"/>
<rect x="262" y="460" width="37" height="2" fill="#800000"/>
<rect x="262" y="479" width="37" height="2" fill="#800000"/>
<rect x="262" y="516" width="37" height="2" fill="#800000"/>
<rect x="262" y="534" width="37" height="2" fill="#800000"/>
<rect x="262" y="552" width="37" height="2" fill="#800000"/>
<rect x="262" y="571" width="37" height="2" fill="#800000"/>
<rect x="262" y="589" width="37" height="2" fill="#800000"/>
<rect x="262" y="608" width="37" height="2" fill="#800000"/>
<rect x="262" y="627" width="37" height="2" fill="#800000"/>
<rect x="262" y="645" width="37" height="2" fill="#800000"/>
<rect x="542" y="256" width="38" height="2" fill="#800000"/>
<rect x="542" y="274" width="38" height="2" fill="#800000"/>
<rect x="542" y="293" width="38" height="2" fill="#800000"/>
<rect x="542" y="311" width="38" height="2" fill="#800000"/>
<rect x="542" y="330" width="38" height="2" fill="#800000"/>
<rect x="542" y="349" width="38" height="2" fill="#800000"/>
<rect x="542" y="367" width="38" height="2" fill="#800000"/>
<rect x="542" y="386" width="38" height="2" fill="#800000"/>
<rect x="542" y="423" width="38" height="2" fill="#800000"/>
<rect x="542" y="442" width="38" height="2" fill="#800000"/>
<rect x="542" y="460" width="38" height="2" fill="#800000"/>
<rect x="542" y="479" width="38" height="2" fill="#800000"/>
<rect x="542" y="497" width="38" height="2" fill="#800000"/>
<rect x="542" y="516" width="38" height="2" fill="#800000"/>
<rect x="542" y="534" width="38" height="2" fill="#800000"/>
<rect x="542" y="552" width="38" height="2" fill="#800000"/>
<rect x="542" y="627" width="38" height="2" fill="#800000"/>
<rect x="542" y="645" width="38" height="2" fill="#800000"/>
</g>
<text transform="translate(279.3,254.0) scale(0.87,1)" font-size="15" fill="#000" text-anchor="end">4</text>
<text transform="translate(309,262.0) scale(0.955,1)" font-size="15" fill="#000" text-anchor="start">RESET</text>
<text transform="translate(279.3,291.0) scale(0.87,1)" font-size="15" fill="#000" text-anchor="end">8</text>
<text transform="translate(309,299.0) scale(0.955,1)" font-size="15" fill="#000" text-anchor="start">XTAL1</text>
<text transform="translate(279.3,309.0) scale(0.87,1)" font-size="15" fill="#000" text-anchor="end">7</text>
<text transform="translate(309,317.0) scale(0.955,1)" font-size="15" fill="#000" text-anchor="start">XTAL2</text>
<text transform="translate(279.3,347.0) scale(0.87,1)" font-size="15" fill="#000" text-anchor="end">37</text>
<text transform="translate(309,355.0) scale(0.955,1)" font-size="15" fill="#000" text-anchor="start">PA0/ADC0</text>
<text transform="translate(279.3,365.0) scale(0.87,1)" font-size="15" fill="#000" text-anchor="end">36</text>
<text transform="translate(309,373.0) scale(0.955,1)" font-size="15" fill="#000" text-anchor="start">PA1/ADC1</text>
<text transform="translate(279.3,384.0) scale(0.87,1)" font-size="15" fill="#000" text-anchor="end">35</text>
<text transform="translate(309,392.0) scale(0.955,1)" font-size="15" fill="#000" text-anchor="start">PA2/ADC2</text>
<text transform="translate(279.3,402.0) scale(0.87,1)" font-size="15" fill="#000" text-anchor="end">34</text>
<text transform="translate(309,410.0) scale(0.955,1)" font-size="15" fill="#000" text-anchor="start">PA3/ADC3</text>
<text transform="translate(279.3,421.0) scale(0.87,1)" font-size="15" fill="#000" text-anchor="end">33</text>
<text transform="translate(309,429.0) scale(0.955,1)" font-size="15" fill="#000" text-anchor="start">PA4/ADC4</text>
<text transform="translate(279.3,440.0) scale(0.87,1)" font-size="15" fill="#000" text-anchor="end">32</text>
<text transform="translate(309,448.0) scale(0.955,1)" font-size="15" fill="#000" text-anchor="start">PA5/ADC5</text>
<text transform="translate(279.3,458.0) scale(0.87,1)" font-size="15" fill="#000" text-anchor="end">31</text>
<text transform="translate(309,466.0) scale(0.955,1)" font-size="15" fill="#000" text-anchor="start">PA6/ADC6</text>
<text transform="translate(279.3,477.0) scale(0.87,1)" font-size="15" fill="#000" text-anchor="end">30</text>
<text transform="translate(309,485.0) scale(0.955,1)" font-size="15" fill="#000" text-anchor="start">PA7/ADC7</text>
<text transform="translate(279.3,514.0) scale(0.87,1)" font-size="15" fill="#000" text-anchor="end">40</text>
<text transform="translate(309,522.0) scale(0.955,1)" font-size="15" fill="#000" text-anchor="start">PB0/XCK/T0</text>
<text transform="translate(279.3,532.0) scale(0.87,1)" font-size="15" fill="#000" text-anchor="end">41</text>
<text transform="translate(309,540.0) scale(0.955,1)" font-size="15" fill="#000" text-anchor="start">PB1/T1</text>
<text transform="translate(279.3,550.0) scale(0.87,1)" font-size="15" fill="#000" text-anchor="end">42</text>
<text transform="translate(309,558.0) scale(0.955,1)" font-size="15" fill="#000" text-anchor="start">PB2/INT2/AIN0</text>
<text transform="translate(279.3,569.0) scale(0.87,1)" font-size="15" fill="#000" text-anchor="end">43</text>
<text transform="translate(309,577.0) scale(0.955,1)" font-size="15" fill="#000" text-anchor="start">PB3/OC0/AIN1</text>
<text transform="translate(279.3,587.0) scale(0.87,1)" font-size="15" fill="#000" text-anchor="end">44</text>
<text transform="translate(309,595.0) scale(0.955,1)" font-size="15" fill="#000" text-anchor="start">PB4/SS</text>
<text transform="translate(279.3,606.0) scale(0.87,1)" font-size="15" fill="#000" text-anchor="end">1</text>
<text transform="translate(309,614.0) scale(0.955,1)" font-size="15" fill="#000" text-anchor="start">PB5/MOSI</text>
<text transform="translate(279.3,625.0) scale(0.87,1)" font-size="15" fill="#000" text-anchor="end">2</text>
<text transform="translate(309,633.0) scale(0.955,1)" font-size="15" fill="#000" text-anchor="start">PB6/MISO</text>
<text transform="translate(279.3,643.0) scale(0.87,1)" font-size="15" fill="#000" text-anchor="end">3</text>
<text transform="translate(309,651.0) scale(0.955,1)" font-size="15" fill="#000" text-anchor="start">PB7/SCK</text>
<text transform="translate(560,254.0) scale(0.87,1)" font-size="15" fill="#000" text-anchor="start">19</text>
<text transform="translate(530.5,262.0) scale(1.0,1)" font-size="15" fill="#000" text-anchor="end">PC0/SCL</text>
<text transform="translate(560,272.0) scale(0.87,1)" font-size="15" fill="#000" text-anchor="start">20</text>
<text transform="translate(530.5,280.0) scale(1.0,1)" font-size="15" fill="#000" text-anchor="end">PC1/SDA</text>
<text transform="translate(560,291.0) scale(0.87,1)" font-size="15" fill="#000" text-anchor="start">21</text>
<text transform="translate(530.5,299.0) scale(1.0,1)" font-size="15" fill="#000" text-anchor="end">PC2/TCK</text>
<text transform="translate(560,309.0) scale(0.87,1)" font-size="15" fill="#000" text-anchor="start">22</text>
<text transform="translate(530.5,317.0) scale(1.0,1)" font-size="15" fill="#000" text-anchor="end">PC3/TMS</text>
<text transform="translate(560,328.0) scale(0.87,1)" font-size="15" fill="#000" text-anchor="start">23</text>
<text transform="translate(530.5,336.0) scale(1.0,1)" font-size="15" fill="#000" text-anchor="end">PC4/TDO</text>
<text transform="translate(560,347.0) scale(0.87,1)" font-size="15" fill="#000" text-anchor="start">24</text>
<text transform="translate(530.5,355.0) scale(1.0,1)" font-size="15" fill="#000" text-anchor="end">PC5/TDI</text>
<text transform="translate(560,365.0) scale(0.87,1)" font-size="15" fill="#000" text-anchor="start">25</text>
<text transform="translate(530.5,373.0) scale(1.0,1)" font-size="15" fill="#000" text-anchor="end">PC6/TOSC1</text>
<text transform="translate(560,384.0) scale(0.87,1)" font-size="15" fill="#000" text-anchor="start">26</text>
<text transform="translate(530.5,392.0) scale(1.0,1)" font-size="15" fill="#000" text-anchor="end">PC7/TOSC2</text>
<text transform="translate(560,421.0) scale(0.87,1)" font-size="15" fill="#000" text-anchor="start">9</text>
<text transform="translate(530.5,429.0) scale(1.0,1)" font-size="15" fill="#000" text-anchor="end">PD0/RXD</text>
<text transform="translate(560,440.0) scale(0.87,1)" font-size="15" fill="#000" text-anchor="start">10</text>
<text transform="translate(530.5,448.0) scale(1.0,1)" font-size="15" fill="#000" text-anchor="end">PD1/TXD</text>
<text transform="translate(560,458.0) scale(0.87,1)" font-size="15" fill="#000" text-anchor="start">11</text>
<text transform="translate(530.5,466.0) scale(1.0,1)" font-size="15" fill="#000" text-anchor="end">PD2/INT0</text>
<text transform="translate(560,477.0) scale(0.87,1)" font-size="15" fill="#000" text-anchor="start">12</text>
<text transform="translate(530.5,485.0) scale(1.0,1)" font-size="15" fill="#000" text-anchor="end">PD3/INT1</text>
<text transform="translate(560,495.0) scale(0.87,1)" font-size="15" fill="#000" text-anchor="start">13</text>
<text transform="translate(530.5,503.0) scale(1.0,1)" font-size="15" fill="#000" text-anchor="end">PD4/OC1B</text>
<text transform="translate(560,514.0) scale(0.87,1)" font-size="15" fill="#000" text-anchor="start">14</text>
<text transform="translate(530.5,522.0) scale(1.0,1)" font-size="15" fill="#000" text-anchor="end">PD5/OC1A</text>
<text transform="translate(560,532.0) scale(0.87,1)" font-size="15" fill="#000" text-anchor="start">15</text>
<text transform="translate(530.5,540.0) scale(1.0,1)" font-size="15" fill="#000" text-anchor="end">PD6/ICP</text>
<text transform="translate(560,550.0) scale(0.87,1)" font-size="15" fill="#000" text-anchor="start">16</text>
<text transform="translate(530.5,558.0) scale(1.0,1)" font-size="15" fill="#000" text-anchor="end">PD7/OC2</text>
<text transform="translate(560,625.0) scale(0.87,1)" font-size="15" fill="#000" text-anchor="start">27</text>
<text transform="translate(530.5,633.0) scale(1.0,1)" font-size="15" fill="#000" text-anchor="end">AVCC</text>
<text transform="translate(560,643.0) scale(0.87,1)" font-size="15" fill="#000" text-anchor="start">29</text>
<text transform="translate(530.5,651.0) scale(1.0,1)" font-size="15" fill="#000" text-anchor="end">AREF</text>
<g shape-rendering="crispEdges">
<rect x="309" y="248" width="52" height="1" fill="#000"/>
<rect x="343" y="581" width="20" height="1" fill="#000"/>
</g>
<text transform="translate(298.5,232) scale(0.963,1)" font-size="23" fill="#000" text-anchor="start">DD1</text>
<text transform="translate(298,680) scale(0.94,1)" font-size="15" fill="#000" text-anchor="start">ATMEGA32</text>
<text transform="translate(298,698.5) scale(0.955,1)" font-size="15" fill="#8c8c8c" text-anchor="start">&lt;TEXT&gt;</text>
<g shape-rendering="crispEdges">
<rect x="580" y="256" width="28" height="2" fill="#004800"/>
<rect x="608" y="256" width="18" height="2" fill="#800000"/>
<rect x="680" y="256" width="21" height="2" fill="#800000"/>
<rect x="701" y="256" width="45" height="2" fill="#004800"/>
<rect x="745" y="238" width="2" height="38" fill="#004800"/>
<rect x="754" y="247" width="2" height="20" fill="#004800"/>
<rect x="764" y="255" width="2" height="4" fill="#004800"/>
<rect x="627" y="241" width="53" height="2" fill="#800000"/>
<rect x="637" y="231" width="32" height="11" fill="#800000"/>
<rect x="639" y="233" width="28" height="8" fill="#c8c6ab"/>
</g>
<circle cx="631.5" cy="257" r="4.5" fill="#c8c6ab" stroke="#800000" stroke-width="2"/>
<circle cx="675.5" cy="257" r="4.5" fill="#c8c6ab" stroke="#800000" stroke-width="2"/>
<circle cx="690.5" cy="238.5" r="6.5" fill="#600000" stroke="#ff2020" stroke-width="1.4"/>
<path d="M690.5 234.5v8M688.5 236.5l2-2 2 2M688.5 240.5l2 2 2-2" fill="none" stroke="#ff3030" stroke-width="1"/>
<text transform="translate(626,226) scale(1.025,1)" font-size="18.5" fill="#800000" text-anchor="start" font-weight="bold">Tembr</text>
<g shape-rendering="crispEdges">
<rect x="745" y="293" width="224" height="151" fill="#800000"/>
<rect x="747" y="295" width="220" height="147" fill="#c8c6ab"/>
<rect x="802" y="312" width="149" height="113" fill="#a00000"/>
<rect x="803" y="313" width="147" height="111" fill="#000"/>
<rect x="811" y="322" width="9" height="9" fill="#00e000"/>
<rect x="709" y="311" width="36" height="2" fill="#800000"/>
<rect x="709" y="349" width="36" height="2" fill="#800000"/>
<rect x="709" y="386" width="36" height="2" fill="#800000"/>
<rect x="709" y="423" width="36" height="2" fill="#800000"/>
<rect x="690" y="311" width="19" height="2" fill="#004800"/>
<rect x="689" y="311" width="2" height="133" fill="#004800"/>
<rect x="580" y="442" width="111" height="2" fill="#004800"/>
</g>
<text transform="translate(755.5,317) scale(0.99,1)" font-size="15" fill="#000" text-anchor="start">RXD</text>
<text transform="translate(755.5,355) scale(0.99,1)" font-size="15" fill="#000" text-anchor="start">TXD</text>
<text transform="translate(755.5,392) scale(0.99,1)" font-size="15" fill="#000" text-anchor="start">RTS</text>
<text transform="translate(755.5,429) scale(0.99,1)" font-size="15" fill="#000" text-anchor="start">CTS</text>
<g shape-rendering="crispEdges">
<rect x="580" y="552" width="55" height="2" fill="#004800"/>
<rect x="635" y="552" width="37" height="2" fill="#800000"/>
<rect x="617" y="589" width="18" height="2" fill="#004800"/>
<rect x="635" y="589" width="37" height="2" fill="#800000"/>
<rect x="615" y="552" width="2" height="95" fill="#004800"/>
<rect x="615" y="645" width="245" height="2" fill="#004800"/>
<rect x="857" y="608" width="2" height="39" fill="#004800"/>
<rect x="857" y="608" width="38" height="2" fill="#004800"/>
<rect x="895" y="608" width="18" height="2" fill="#800000"/>
<rect x="794" y="571" width="27" height="2" fill="#800000"/>
<rect x="821" y="571" width="74" height="2" fill="#004800"/>
<rect x="895" y="571" width="18" height="2" fill="#800000"/>
</g>
<path d="M672 535H746A37 37 0 0 1 782.5 572A28.5 37 0 0 1 754 609H672Z" fill="#c8c6ab" stroke="#800000" stroke-width="2"/>
<circle cx="789.4" cy="572.3" r="4.6" fill="#e2e2d9" stroke="#800000" stroke-width="1.8"/>
<circle cx="616" cy="553" r="3.6" fill="#004800"/>
<circle cx="616" cy="590" r="3.6" fill="#004800"/>
<circle cx="634.5" cy="646" r="5.5" fill="none" stroke="#0000ff" stroke-width="1"/>
<rect x="634" y="637" width="1" height="20" fill="#0000ff" shape-rendering="crispEdges"/>
<text transform="translate(645,549.5) scale(0.87,1)" font-size="15" fill="#000" text-anchor="start">1</text>
<text transform="translate(644,587) scale(0.87,1)" font-size="15" fill="#000" text-anchor="start">2</text>
<text transform="translate(802,568.5) scale(0.87,1)" font-size="15" fill="#000" text-anchor="start">3</text>
<text transform="translate(669.5,528) scale(1.0,1)" font-size="23" fill="#000" text-anchor="start">U?:A</text>
<text transform="translate(671,624.5) scale(0.92,1)" font-size="15" fill="#000" text-anchor="start">7400</text>
<text transform="translate(671,643) scale(0.955,1)" font-size="15" fill="#8c8c8c" text-anchor="start">&lt;TEXT&gt;</text>
<g shape-rendering="crispEdges">
<rect x="912" y="562" width="11" height="57" fill="#800000"/>
<rect x="914" y="564" width="7" height="53" fill="#c8c6ab"/>
<rect x="941" y="589" width="28" height="2" fill="#800000"/>
</g>
<path d="M940.5 572.5l19-19M940.5 609.5l19 19" fill="none" stroke="#800000" stroke-width="2.2"/>
<text transform="translate(911.3,547) scale(1.0,1)" font-size="23" fill="#000" text-anchor="start">LS1</text>
<text transform="translate(912,643) scale(0.955,1)" font-size="15" fill="#000" text-anchor="start">SOUNDER</text>
<text transform="translate(912,662) scale(0.955,1)" font-size="15" fill="#8c8c8c" text-anchor="start">&lt;TEXT&gt;</text>
<text x="653" y="726.3" font-size="12" fill="#800000" textLength="400" lengthAdjust="spacingAndGlyphs">Для нормальной работы в симуляторе,  частота процессора снижена.</text>
<text x="653" y="744.9" font-size="12" fill="#800000" textLength="471.5" lengthAdjust="spacingAndGlyphs">Это нужно что бы компоненты SOUNDER или SPEAKER, не сильно искажали звук.</text>
<text x="653" y="763.4" font-size="12" fill="#800000" textLength="467.7" lengthAdjust="spacingAndGlyphs">Частота дискретизации в компоненте SOUNDER(SPEAKER) оптимальна 22050Hz</text>
<text x="653" y="782.0" font-size="12" fill="#800000" textLength="605.3" lengthAdjust="spacingAndGlyphs">Если появляются варнинги "Simulation is not running in real time...", то частоту необходимо еще уменьшить.</text>
<text x="653" y="800.5" font-size="12" fill="#800000" textLength="467.7" lengthAdjust="spacingAndGlyphs">Частота дискретизации в компоненте SOUNDER(SPEAKER) оптимальна 22050Hz</text>
<text x="653" y="837.7" font-size="12" fill="#800000" textLength="584.4" lengthAdjust="spacingAndGlyphs">А на реальном железе, чем выше частота, тем лучше (меньше шума от PWM), и не стоит использовать</text>
<text x="653" y="856.2" font-size="12" fill="#800000" textLength="436.6" lengthAdjust="spacingAndGlyphs">пьезоэлементы в качестве звукоизлучателя, лучше высокоомные динамики.</text>
<text x="653" y="893.3" font-size="12" fill="#800000" textLength="557.5" lengthAdjust="spacingAndGlyphs">Если звук хрипит при симуляции, то могу рекомендовать, сперва запустить на паузе(кнопка Step),</text>
<text x="653" y="911.9" font-size="12" fill="#800000" textLength="372.4" lengthAdjust="spacingAndGlyphs">и через несколько секунд запустить окончательно (кнопка Play).</text>
<g shape-rendering="crispEdges">
<path d="M40.5 77.5h100v84h-100z" fill="none" stroke="#0000ff" stroke-width="1"/>
<path d="M65.5 82.5h80v57h-80z" fill="none" stroke="#00c000" stroke-width="1"/>
<path d="M72.5 93.5h13v27h-13z" fill="none" stroke="#000" stroke-width="1"/>
<rect x="96" y="97" width="13" height="10" fill="#000"/>
<rect x="98" y="99" width="9" height="6" fill="#e2e2d9"/>
<rect x="96" y="97" width="2" height="10" fill="#000"/>
<path d="M86.5 94.5h2M89.5 94.5h1M91 93.5h2M93.5 94.5h4" fill="none" stroke="#000" stroke-width="1"/>
<rect x="97" y="93" width="1" height="3" fill="#000"/>
<path d="M86.5 105.5h7.5v-7" fill="none" stroke="#000" stroke-width="1"/>
<path d="M87.5 112.5h2v4M89.5 112.5h4l2 2v2l-2 2h-4z" fill="none" stroke="#000" stroke-width="1"/>
<path d="M89.5 118.5v3h15v-4M95.5 115.5h9" fill="none" stroke="#000" stroke-width="1"/>
<rect x="106" y="113" width="2" height="7" fill="#000"/>
<rect x="108" y="114" width="1" height="1" fill="#000"/>
<rect x="109" y="115" width="1" height="1" fill="#000"/>
<rect x="108" y="117" width="1" height="1" fill="#000"/>
<rect x="109" y="119" width="1" height="1" fill="#000"/>
<path d="M91.5 123v13" fill="none" stroke="#000" stroke-width="1" stroke-dasharray="2 2"/>
</g>
<g shape-rendering="crispEdges">
<rect x="31" y="175" width="119" height="16" fill="#808080"/>
<rect x="31" y="175" width="16" height="16" fill="#d4d0c8"/>
<rect x="31" y="175" width="16" height="1" fill="#fff"/>
<rect x="31" y="175" width="1" height="16" fill="#fff"/>
<rect x="46" y="175" width="1" height="16" fill="#404040"/>
<rect x="31" y="190" width="16" height="1" fill="#404040"/>
<rect x="45" y="176" width="1" height="14" fill="#808080"/>
<rect x="32" y="189" width="14" height="1" fill="#808080"/>
<rect x="47" y="175" width="17" height="16" fill="#d4d0c8"/>
<rect x="47" y="175" width="17" height="1" fill="#fff"/>
<rect x="47" y="175" width="1" height="16" fill="#fff"/>
<rect x="63" y="175" width="1" height="16" fill="#404040"/>
<rect x="47" y="190" width="17" height="1" fill="#404040"/>
<rect x="62" y="176" width="1" height="14" fill="#808080"/>
<rect x="48" y="189" width="15" height="1" fill="#808080"/>
<rect x="31" y="191" width="119" height="14" fill="#0a246a"/>
</g>
<text x="34" y="187" font-size="12" fill="#000">P</text>
<text x="51" y="187" font-size="12" fill="#000">L</text>
<text x="84.5" y="187" font-size="10.5" fill="#d4d0c8" textLength="44.5" lengthAdjust="spacingAndGlyphs">DEVICES</text>
<path d="M65 201h1M67 201h1M69 201h1M71 201h1M73 201h1M75 201h1M77 201h1M79 201h1M81 201h1M83 201h1M85 201h1M87 201h1M89 201h1M91 201h1M93 201h1M95 201h1M97 201h1M99 201h1M101 201h1M103 201h1M105 201h1M107 201h1M109 201h1M111 201h1M113 201h1M115 201h1M117 201h1M119 201h1M121 201h1M123 201h1M125 201h1M127 201h1M129 201h1M131 201h1M133 201h1M135 201h1M137 201h1M139 201h1M141 201h1M143 201h1M145 201h1M147 201h1" stroke="#5070a0" stroke-width="1" shape-rendering="crispEdges"/>
<text x="33.3" y="203" font-size="11" fill="#fff" textLength="22.6" lengthAdjust="spacingAndGlyphs">7400</text>
<text x="33.3" y="216" font-size="11" fill="#000" textLength="56.7" lengthAdjust="spacingAndGlyphs">ATMEGA32</text>
<text x="33.3" y="229" font-size="11" fill="#000" textLength="86.8" lengthAdjust="spacingAndGlyphs">AVX1206NP033P</text>
<text x="33.3" y="242" font-size="11" fill="#000" textLength="44.5" lengthAdjust="spacingAndGlyphs">BUTTON</text>
<text x="33.3" y="255" font-size="11" fill="#000" textLength="64" lengthAdjust="spacingAndGlyphs">CN1812K20G</text>
<text x="33.3" y="268" font-size="11" fill="#000" textLength="21" lengthAdjust="spacingAndGlyphs">RES</text>
<text x="33.3" y="281" font-size="11" fill="#000" textLength="52" lengthAdjust="spacingAndGlyphs">SOUNDER</text>
<text x="33.3" y="294" font-size="11" fill="#000" textLength="48" lengthAdjust="spacingAndGlyphs">SPEAKER</text>
<text x="33.3" y="307" font-size="11" fill="#000" textLength="29" lengthAdjust="spacingAndGlyphs">[7400]</text>
<g shape-rendering="crispEdges">
<rect x="2" y="975" width="1" height="20" fill="#fff"/>
<rect x="3" y="975" width="1" height="20" fill="#d4d0c8"/>
<rect x="4" y="975" width="1" height="20" fill="#808080"/>
<rect x="2" y="994" width="3" height="1" fill="#808080"/>
<rect x="10" y="975" width="158" height="20" fill="#000"/>
<rect x="11" y="976" width="38" height="18" fill="#d4d0c8"/>
<rect x="11" y="976" width="38" height="1" fill="#fff"/>
<rect x="11" y="976" width="1" height="18" fill="#fff"/>
<rect x="48" y="976" width="1" height="18" fill="#808080"/>
<rect x="11" y="993" width="38" height="1" fill="#808080"/>
<rect x="50" y="976" width="38" height="18" fill="#d4d0c8"/>
<rect x="50" y="976" width="38" height="1" fill="#fff"/>
<rect x="50" y="976" width="1" height="18" fill="#fff"/>
<rect x="87" y="976" width="1" height="18" fill="#808080"/>
<rect x="50" y="993" width="38" height="1" fill="#808080"/>
<rect x="89" y="976" width="38" height="18" fill="#d4d0c8"/>
<rect x="89" y="976" width="38" height="1" fill="#fff"/>
<rect x="89" y="976" width="1" height="18" fill="#fff"/>
<rect x="126" y="976" width="1" height="18" fill="#808080"/>
<rect x="89" y="993" width="38" height="1" fill="#808080"/>
<rect x="128" y="976" width="38" height="18" fill="#d4d0c8"/>
<rect x="128" y="976" width="38" height="1" fill="#fff"/>
<rect x="128" y="976" width="1" height="18" fill="#fff"/>
<rect x="165" y="976" width="1" height="18" fill="#808080"/>
<rect x="128" y="993" width="38" height="1" fill="#808080"/>
</g>
<path d="M27 979v11l7.5-5.5z" fill="#000"/>
<g shape-rendering="crispEdges">
<rect x="64" y="979" width="2" height="10" fill="#000"/>
</g>
<path d="M69 979.5v9l6-4.5z" fill="#000"/>
<g shape-rendering="crispEdges">
<rect x="104" y="979" width="3" height="10" fill="#000"/>
<rect x="109" y="979" width="3" height="10" fill="#000"/>
<rect x="142" y="980" width="10" height="9" fill="#000"/>
<rect x="172" y="975" width="98" height="1" fill="#808080"/>
<rect x="172" y="975" width="1" height="20" fill="#808080"/>
<rect x="172" y="994" width="98" height="1" fill="#fff"/>
<rect x="269" y="975" width="1" height="20" fill="#fff"/>
</g>
<circle cx="182.5" cy="984.5" r="6.5" fill="#5a5a5a"/>
<text x="179.5" y="989" font-size="9" font-weight="bold" fill="#fff">i</text>
<text x="198.5" y="989" font-size="11" fill="#808080" textLength="64.5" lengthAdjust="spacingAndGlyphs">No Messages</text>
<g shape-rendering="crispEdges">
<rect x="276" y="973" width="1" height="24" fill="#808080"/>
<rect x="277" y="973" width="1" height="24" fill="#fff"/>
<rect x="280" y="975" width="1" height="20" fill="#fff"/>
<rect x="281" y="975" width="1" height="20" fill="#d4d0c8"/>
<rect x="282" y="975" width="1" height="20" fill="#808080"/>
<rect x="280" y="994" width="3" height="1" fill="#808080"/>
<rect x="285" y="976" width="1251" height="1" fill="#808080"/>
<rect x="285" y="976" width="1" height="16" fill="#808080"/>
<rect x="285" y="991" width="1251" height="1" fill="#fff"/>
<rect x="1535" y="976" width="1" height="16" fill="#fff"/>
<rect x="1540" y="973" width="1" height="24" fill="#808080"/>
<rect x="1541" y="973" width="1" height="24" fill="#fff"/>
<rect x="1543" y="975" width="1" height="20" fill="#fff"/>
<rect x="1544" y="975" width="1" height="20" fill="#d4d0c8"/>
<rect x="1545" y="975" width="1" height="20" fill="#808080"/>
<rect x="1543" y="994" width="3" height="1" fill="#808080"/>
<rect x="1551" y="976" width="125" height="1" fill="#808080"/>
<rect x="1551" y="976" width="1" height="16" fill="#808080"/>
<rect x="1551" y="991" width="125" height="1" fill="#fff"/>
<rect x="1675" y="976" width="1" height="16" fill="#fff"/>
</g>
<text x="288.5" y="989" font-size="11" fill="#000" textLength="127" lengthAdjust="spacingAndGlyphs">Loading design 'speaker4'.</text>
<text x="1559.5" y="989" font-size="11" fill="#000" textLength="38.5" lengthAdjust="spacingAndGlyphs">+4700.0</text>
<text x="1608.5" y="989" font-size="11" fill="#000" textLength="39" lengthAdjust="spacingAndGlyphs">+1300.0</text>
<text x="1664" y="989" font-size="11" fill="#000080" textLength="9.5" lengthAdjust="spacingAndGlyphs">th</text></svg></body></html>
